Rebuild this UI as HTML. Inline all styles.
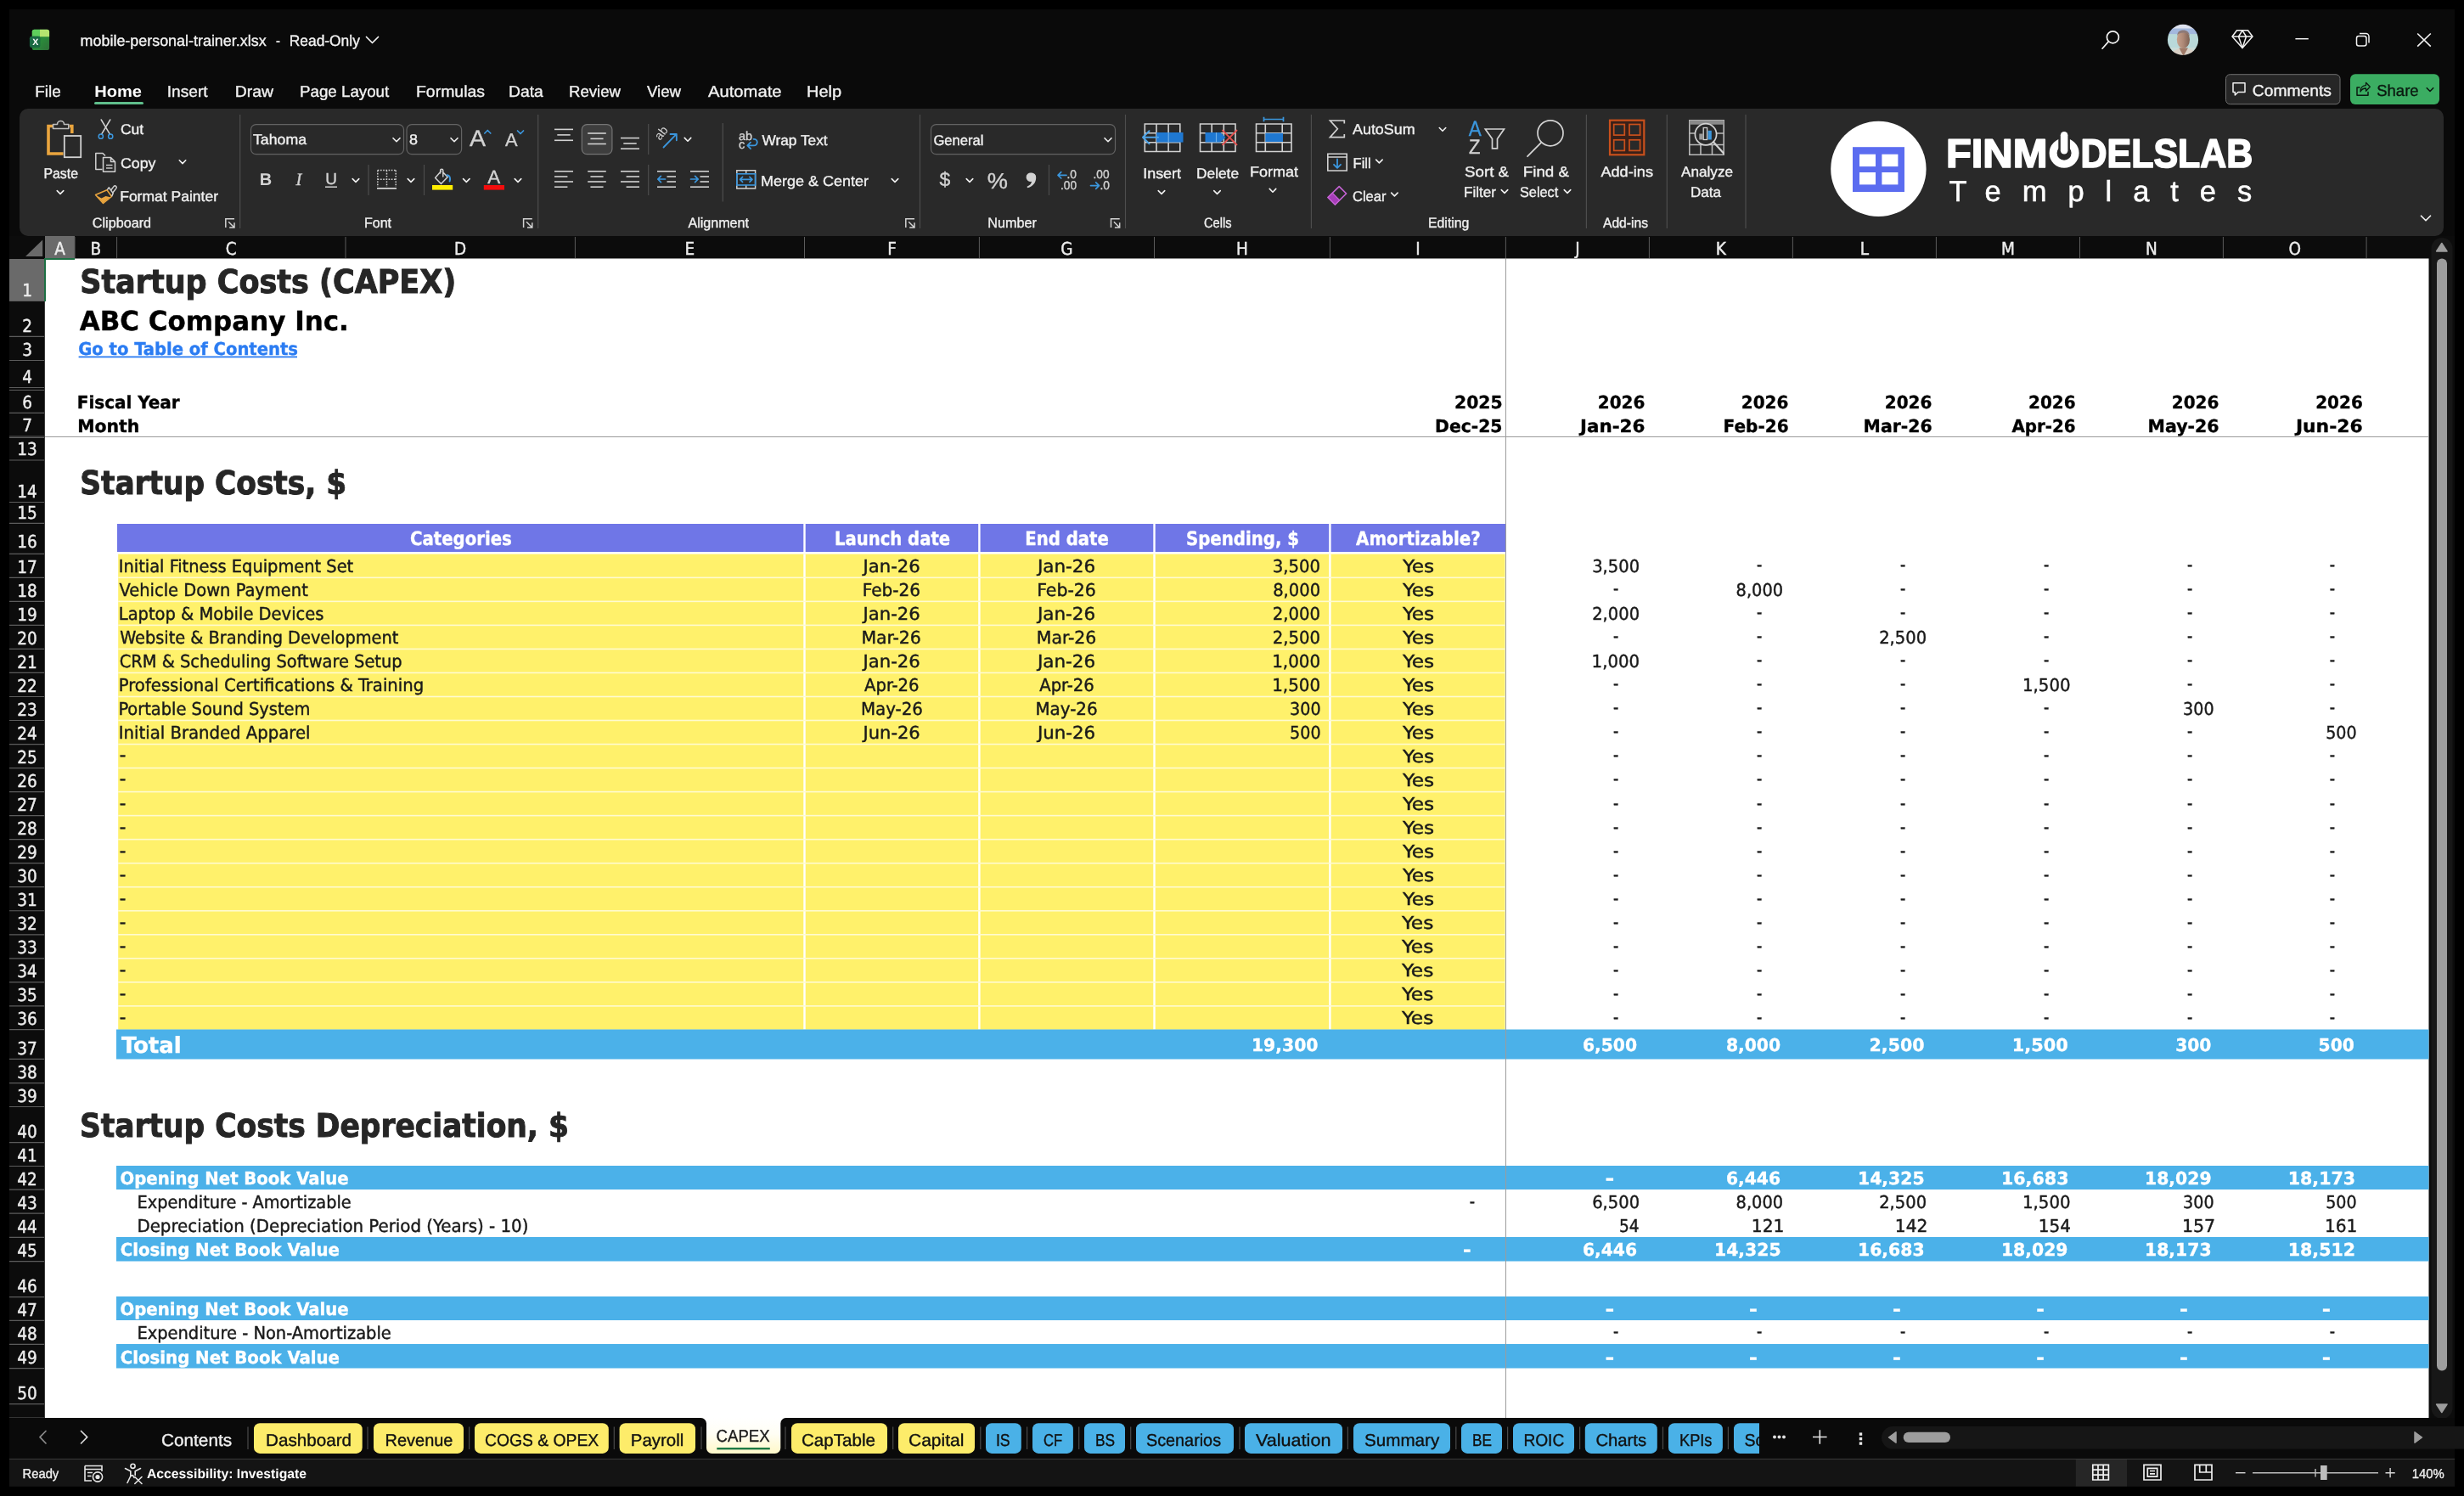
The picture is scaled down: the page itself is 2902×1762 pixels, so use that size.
<!DOCTYPE html>
<html lang="en"><head><meta charset="utf-8"><title>mobile-personal-trainer.xlsx - Excel</title>
<style>
html,body{margin:0;padding:0;background:#000;}
body{width:2902px;height:1762px;overflow:hidden;position:relative;font-family:'Liberation Sans','DejaVu Sans',sans-serif;}
#win{position:absolute;left:11px;top:11px;width:2880px;height:1740px;background:#0a0a0a;}
svg{overflow:hidden;display:block;will-change:transform}
svg text{white-space:pre;text-rendering:geometricPrecision}
svg.grid text{font-family:'DejaVu Sans Condensed','DejaVu Sans',sans-serif}
svg.ui text{font-family:'Liberation Sans','DejaVu Sans',sans-serif}
</style></head>
<body>
<div id="win"></div>
<svg class="grid" style="position:absolute;left:0px;top:278px" width="2902" height="1392" viewBox="0 278 2902 1392">
<rect x="11" y="278" width="2880" height="1392" fill="#0c0c0c"/>
<rect x="53" y="305" width="2807.5" height="1365" fill="#fff"/>
<rect x="53" y="278" width="35" height="27" fill="#6a6a6a"/>
<rect x="11" y="305" width="42" height="49.5" fill="#6a6a6a"/>
<path d="M50.2 282.5 L50.2 302 L30 302 Z" fill="#6a6a6a"/>
<text x="70.5" y="299.5" font-size="20.53" fill="#ececec" text-anchor="middle" stroke="#ececec" stroke-width="0.4">A</text>
<line x1="88" y1="279" x2="88" y2="305" stroke="#5c5c5c" stroke-width="1"/>
<text x="112.8" y="299.5" font-size="20.53" fill="#ececec" text-anchor="middle" stroke="#ececec" stroke-width="0.4">B</text>
<line x1="137.6" y1="279" x2="137.6" y2="305" stroke="#5c5c5c" stroke-width="1"/>
<text x="272.3" y="299.5" font-size="20.53" fill="#ececec" text-anchor="middle" stroke="#ececec" stroke-width="0.4">C</text>
<line x1="407" y1="279" x2="407" y2="305" stroke="#5c5c5c" stroke-width="1"/>
<text x="542.2" y="299.5" font-size="20.53" fill="#ececec" text-anchor="middle" stroke="#ececec" stroke-width="0.4">D</text>
<line x1="677.4" y1="279" x2="677.4" y2="305" stroke="#5c5c5c" stroke-width="1"/>
<text x="812.45" y="299.5" font-size="20.53" fill="#ececec" text-anchor="middle" stroke="#ececec" stroke-width="0.4">E</text>
<line x1="947.5" y1="279" x2="947.5" y2="305" stroke="#5c5c5c" stroke-width="1"/>
<text x="1050.45" y="299.5" font-size="20.53" fill="#ececec" text-anchor="middle" stroke="#ececec" stroke-width="0.4">F</text>
<line x1="1153.4" y1="279" x2="1153.4" y2="305" stroke="#5c5c5c" stroke-width="1"/>
<text x="1256.45" y="299.5" font-size="20.53" fill="#ececec" text-anchor="middle" stroke="#ececec" stroke-width="0.4">G</text>
<line x1="1359.5" y1="279" x2="1359.5" y2="305" stroke="#5c5c5c" stroke-width="1"/>
<text x="1462.95" y="299.5" font-size="20.53" fill="#ececec" text-anchor="middle" stroke="#ececec" stroke-width="0.4">H</text>
<line x1="1566.4" y1="279" x2="1566.4" y2="305" stroke="#5c5c5c" stroke-width="1"/>
<text x="1669.9" y="299.5" font-size="20.53" fill="#ececec" text-anchor="middle" stroke="#ececec" stroke-width="0.4">I</text>
<line x1="1773.4" y1="279" x2="1773.4" y2="305" stroke="#5c5c5c" stroke-width="1"/>
<text x="1857.9" y="299.5" font-size="20.53" fill="#ececec" text-anchor="middle" stroke="#ececec" stroke-width="0.4">J</text>
<line x1="1942.4" y1="279" x2="1942.4" y2="305" stroke="#5c5c5c" stroke-width="1"/>
<text x="2026.9" y="299.5" font-size="20.53" fill="#ececec" text-anchor="middle" stroke="#ececec" stroke-width="0.4">K</text>
<line x1="2111.4" y1="279" x2="2111.4" y2="305" stroke="#5c5c5c" stroke-width="1"/>
<text x="2195.9" y="299.5" font-size="20.53" fill="#ececec" text-anchor="middle" stroke="#ececec" stroke-width="0.4">L</text>
<line x1="2280.4" y1="279" x2="2280.4" y2="305" stroke="#5c5c5c" stroke-width="1"/>
<text x="2364.95" y="299.5" font-size="20.53" fill="#ececec" text-anchor="middle" stroke="#ececec" stroke-width="0.4">M</text>
<line x1="2449.5" y1="279" x2="2449.5" y2="305" stroke="#5c5c5c" stroke-width="1"/>
<text x="2533.95" y="299.5" font-size="20.53" fill="#ececec" text-anchor="middle" stroke="#ececec" stroke-width="0.4">N</text>
<line x1="2618.4" y1="279" x2="2618.4" y2="305" stroke="#5c5c5c" stroke-width="1"/>
<text x="2702.75" y="299.5" font-size="20.53" fill="#ececec" text-anchor="middle" stroke="#ececec" stroke-width="0.4">O</text>
<line x1="2787.1" y1="279" x2="2787.1" y2="305" stroke="#5c5c5c" stroke-width="1"/>
<line x1="53" y1="304.5" x2="2860.5" y2="304.5" stroke="#8a8a8a" stroke-width="1"/>
<line x1="11" y1="354.5" x2="53" y2="354.5" stroke="#5c5c5c" stroke-width="1.2"/>
<text x="32" y="348.8" font-size="20.53" fill="#ececec" text-anchor="middle" stroke="#ececec" stroke-width="0.4">1</text>
<line x1="11" y1="396.4" x2="53" y2="396.4" stroke="#5c5c5c" stroke-width="1.2"/>
<text x="32" y="390.7" font-size="20.53" fill="#ececec" text-anchor="middle" stroke="#ececec" stroke-width="0.4">2</text>
<line x1="11" y1="424.5" x2="53" y2="424.5" stroke="#5c5c5c" stroke-width="1.2"/>
<text x="32" y="418.8" font-size="20.53" fill="#ececec" text-anchor="middle" stroke="#ececec" stroke-width="0.4">3</text>
<line x1="11" y1="456.5" x2="53" y2="456.5" stroke="#5c5c5c" stroke-width="1.2"/>
<text x="32" y="450.8" font-size="20.53" fill="#ececec" text-anchor="middle" stroke="#ececec" stroke-width="0.4">4</text>
<line x1="11" y1="486.4" x2="53" y2="486.4" stroke="#5c5c5c" stroke-width="1.2"/>
<text x="32" y="480.7" font-size="20.53" fill="#ececec" text-anchor="middle" stroke="#ececec" stroke-width="0.4">6</text>
<line x1="11" y1="514" x2="53" y2="514" stroke="#5c5c5c" stroke-width="1.2"/>
<text x="32" y="508.3" font-size="20.53" fill="#ececec" text-anchor="middle" stroke="#ececec" stroke-width="0.4">7</text>
<line x1="11" y1="542" x2="53" y2="542" stroke="#5c5c5c" stroke-width="1.2"/>
<text x="32" y="536.3" font-size="20.53" fill="#ececec" text-anchor="middle" stroke="#ececec" stroke-width="0.4">13</text>
<line x1="11" y1="591.5" x2="53" y2="591.5" stroke="#5c5c5c" stroke-width="1.2"/>
<text x="32" y="585.8" font-size="20.53" fill="#ececec" text-anchor="middle" stroke="#ececec" stroke-width="0.4">14</text>
<line x1="11" y1="616.3" x2="53" y2="616.3" stroke="#5c5c5c" stroke-width="1.2"/>
<text x="32" y="610.6" font-size="20.53" fill="#ececec" text-anchor="middle" stroke="#ececec" stroke-width="0.4">15</text>
<line x1="11" y1="652.3" x2="53" y2="652.3" stroke="#5c5c5c" stroke-width="1.2"/>
<text x="32" y="644.7" font-size="20.53" fill="#ececec" text-anchor="middle" stroke="#ececec" stroke-width="0.4">16</text>
<line x1="11" y1="680.33" x2="53" y2="680.33" stroke="#5c5c5c" stroke-width="1.2"/>
<text x="32" y="674.63" font-size="20.53" fill="#ececec" text-anchor="middle" stroke="#ececec" stroke-width="0.4">17</text>
<line x1="11" y1="708.36" x2="53" y2="708.36" stroke="#5c5c5c" stroke-width="1.2"/>
<text x="32" y="702.66" font-size="20.53" fill="#ececec" text-anchor="middle" stroke="#ececec" stroke-width="0.4">18</text>
<line x1="11" y1="736.39" x2="53" y2="736.39" stroke="#5c5c5c" stroke-width="1.2"/>
<text x="32" y="730.69" font-size="20.53" fill="#ececec" text-anchor="middle" stroke="#ececec" stroke-width="0.4">19</text>
<line x1="11" y1="764.42" x2="53" y2="764.42" stroke="#5c5c5c" stroke-width="1.2"/>
<text x="32" y="758.72" font-size="20.53" fill="#ececec" text-anchor="middle" stroke="#ececec" stroke-width="0.4">20</text>
<line x1="11" y1="792.45" x2="53" y2="792.45" stroke="#5c5c5c" stroke-width="1.2"/>
<text x="32" y="786.75" font-size="20.53" fill="#ececec" text-anchor="middle" stroke="#ececec" stroke-width="0.4">21</text>
<line x1="11" y1="820.48" x2="53" y2="820.48" stroke="#5c5c5c" stroke-width="1.2"/>
<text x="32" y="814.78" font-size="20.53" fill="#ececec" text-anchor="middle" stroke="#ececec" stroke-width="0.4">22</text>
<line x1="11" y1="848.51" x2="53" y2="848.51" stroke="#5c5c5c" stroke-width="1.2"/>
<text x="32" y="842.81" font-size="20.53" fill="#ececec" text-anchor="middle" stroke="#ececec" stroke-width="0.4">23</text>
<line x1="11" y1="876.54" x2="53" y2="876.54" stroke="#5c5c5c" stroke-width="1.2"/>
<text x="32" y="870.84" font-size="20.53" fill="#ececec" text-anchor="middle" stroke="#ececec" stroke-width="0.4">24</text>
<line x1="11" y1="904.57" x2="53" y2="904.57" stroke="#5c5c5c" stroke-width="1.2"/>
<text x="32" y="898.87" font-size="20.53" fill="#ececec" text-anchor="middle" stroke="#ececec" stroke-width="0.4">25</text>
<line x1="11" y1="932.6" x2="53" y2="932.6" stroke="#5c5c5c" stroke-width="1.2"/>
<text x="32" y="926.9" font-size="20.53" fill="#ececec" text-anchor="middle" stroke="#ececec" stroke-width="0.4">26</text>
<line x1="11" y1="960.63" x2="53" y2="960.63" stroke="#5c5c5c" stroke-width="1.2"/>
<text x="32" y="954.93" font-size="20.53" fill="#ececec" text-anchor="middle" stroke="#ececec" stroke-width="0.4">27</text>
<line x1="11" y1="988.66" x2="53" y2="988.66" stroke="#5c5c5c" stroke-width="1.2"/>
<text x="32" y="982.96" font-size="20.53" fill="#ececec" text-anchor="middle" stroke="#ececec" stroke-width="0.4">28</text>
<line x1="11" y1="1016.69" x2="53" y2="1016.69" stroke="#5c5c5c" stroke-width="1.2"/>
<text x="32" y="1010.99" font-size="20.53" fill="#ececec" text-anchor="middle" stroke="#ececec" stroke-width="0.4">29</text>
<line x1="11" y1="1044.72" x2="53" y2="1044.72" stroke="#5c5c5c" stroke-width="1.2"/>
<text x="32" y="1039.02" font-size="20.53" fill="#ececec" text-anchor="middle" stroke="#ececec" stroke-width="0.4">30</text>
<line x1="11" y1="1072.75" x2="53" y2="1072.75" stroke="#5c5c5c" stroke-width="1.2"/>
<text x="32" y="1067.05" font-size="20.53" fill="#ececec" text-anchor="middle" stroke="#ececec" stroke-width="0.4">31</text>
<line x1="11" y1="1100.78" x2="53" y2="1100.78" stroke="#5c5c5c" stroke-width="1.2"/>
<text x="32" y="1095.08" font-size="20.53" fill="#ececec" text-anchor="middle" stroke="#ececec" stroke-width="0.4">32</text>
<line x1="11" y1="1128.81" x2="53" y2="1128.81" stroke="#5c5c5c" stroke-width="1.2"/>
<text x="32" y="1123.11" font-size="20.53" fill="#ececec" text-anchor="middle" stroke="#ececec" stroke-width="0.4">33</text>
<line x1="11" y1="1156.84" x2="53" y2="1156.84" stroke="#5c5c5c" stroke-width="1.2"/>
<text x="32" y="1151.14" font-size="20.53" fill="#ececec" text-anchor="middle" stroke="#ececec" stroke-width="0.4">34</text>
<line x1="11" y1="1184.87" x2="53" y2="1184.87" stroke="#5c5c5c" stroke-width="1.2"/>
<text x="32" y="1179.17" font-size="20.53" fill="#ececec" text-anchor="middle" stroke="#ececec" stroke-width="0.4">35</text>
<line x1="11" y1="1212.7" x2="53" y2="1212.7" stroke="#5c5c5c" stroke-width="1.2"/>
<text x="32" y="1207" font-size="20.53" fill="#ececec" text-anchor="middle" stroke="#ececec" stroke-width="0.4">36</text>
<line x1="11" y1="1247.3" x2="53" y2="1247.3" stroke="#5c5c5c" stroke-width="1.2"/>
<text x="32" y="1241.6" font-size="20.53" fill="#ececec" text-anchor="middle" stroke="#ececec" stroke-width="0.4">37</text>
<line x1="11" y1="1275.6" x2="53" y2="1275.6" stroke="#5c5c5c" stroke-width="1.2"/>
<text x="32" y="1269.9" font-size="20.53" fill="#ececec" text-anchor="middle" stroke="#ececec" stroke-width="0.4">38</text>
<line x1="11" y1="1303.5" x2="53" y2="1303.5" stroke="#5c5c5c" stroke-width="1.2"/>
<text x="32" y="1297.8" font-size="20.53" fill="#ececec" text-anchor="middle" stroke="#ececec" stroke-width="0.4">39</text>
<line x1="11" y1="1345.6" x2="53" y2="1345.6" stroke="#5c5c5c" stroke-width="1.2"/>
<text x="32" y="1339.9" font-size="20.53" fill="#ececec" text-anchor="middle" stroke="#ececec" stroke-width="0.4">40</text>
<line x1="11" y1="1373.5" x2="53" y2="1373.5" stroke="#5c5c5c" stroke-width="1.2"/>
<text x="32" y="1367.8" font-size="20.53" fill="#ececec" text-anchor="middle" stroke="#ececec" stroke-width="0.4">41</text>
<line x1="11" y1="1401.2" x2="53" y2="1401.2" stroke="#5c5c5c" stroke-width="1.2"/>
<text x="32" y="1395.5" font-size="20.53" fill="#ececec" text-anchor="middle" stroke="#ececec" stroke-width="0.4">42</text>
<line x1="11" y1="1429.2" x2="53" y2="1429.2" stroke="#5c5c5c" stroke-width="1.2"/>
<text x="32" y="1423.5" font-size="20.53" fill="#ececec" text-anchor="middle" stroke="#ececec" stroke-width="0.4">43</text>
<line x1="11" y1="1457.3" x2="53" y2="1457.3" stroke="#5c5c5c" stroke-width="1.2"/>
<text x="32" y="1451.6" font-size="20.53" fill="#ececec" text-anchor="middle" stroke="#ececec" stroke-width="0.4">44</text>
<line x1="11" y1="1485.6" x2="53" y2="1485.6" stroke="#5c5c5c" stroke-width="1.2"/>
<text x="32" y="1479.9" font-size="20.53" fill="#ececec" text-anchor="middle" stroke="#ececec" stroke-width="0.4">45</text>
<line x1="11" y1="1527.6" x2="53" y2="1527.6" stroke="#5c5c5c" stroke-width="1.2"/>
<text x="32" y="1521.9" font-size="20.53" fill="#ececec" text-anchor="middle" stroke="#ececec" stroke-width="0.4">46</text>
<line x1="11" y1="1555.3" x2="53" y2="1555.3" stroke="#5c5c5c" stroke-width="1.2"/>
<text x="32" y="1549.6" font-size="20.53" fill="#ececec" text-anchor="middle" stroke="#ececec" stroke-width="0.4">47</text>
<line x1="11" y1="1583.3" x2="53" y2="1583.3" stroke="#5c5c5c" stroke-width="1.2"/>
<text x="32" y="1577.6" font-size="20.53" fill="#ececec" text-anchor="middle" stroke="#ececec" stroke-width="0.4">48</text>
<line x1="11" y1="1611.6" x2="53" y2="1611.6" stroke="#5c5c5c" stroke-width="1.2"/>
<text x="32" y="1605.9" font-size="20.53" fill="#ececec" text-anchor="middle" stroke="#ececec" stroke-width="0.4">49</text>
<line x1="11" y1="1653.6" x2="53" y2="1653.6" stroke="#5c5c5c" stroke-width="1.2"/>
<text x="32" y="1647.9" font-size="20.53" fill="#ececec" text-anchor="middle" stroke="#ececec" stroke-width="0.4">50</text>
<line x1="11" y1="1670" x2="53" y2="1670" stroke="#5c5c5c" stroke-width="1.2"/>
<line x1="11" y1="459.5" x2="53" y2="459.5" stroke="#5c5c5c" stroke-width="1"/>
<line x1="11" y1="515.5" x2="53" y2="515.5" stroke="#5c5c5c" stroke-width="1"/>
<line x1="52.5" y1="305" x2="52.5" y2="1670" stroke="#3a3a3a" stroke-width="1"/>
<rect x="53" y="304" width="35" height="2" fill="#1d7044"/>
<rect x="52" y="304" width="2" height="51" fill="#1d7044"/>
<text x="94.20" y="344.8" font-size="38.6" fill="#262626" textLength="443.02" lengthAdjust="spacingAndGlyphs" font-weight="bold" stroke="#262626" stroke-width="0.91">Startup Costs (CAPEX)</text>
<text x="93.80" y="388.5" font-size="31.7" fill="#000" textLength="317.01" lengthAdjust="spacingAndGlyphs" font-weight="bold" stroke="#000" stroke-width="0.35">ABC Company Inc.</text>
<text x="92.20" y="417.6" font-size="20.53" fill="#2b7cf2" textLength="258.82" lengthAdjust="spacingAndGlyphs" font-weight="bold" stroke="#2b7cf2" stroke-width="0.35">Go to Table of Contents</text>
<rect x="92.6" y="419.5" width="257.4" height="1.8" fill="#2b7cf2"/>
<text x="90.80" y="481" font-size="20.53" fill="#000" textLength="120.91" lengthAdjust="spacingAndGlyphs" font-weight="bold" stroke="#000" stroke-width="0.35">Fiscal Year</text>
<text x="91.20" y="508.8" font-size="20.53" fill="#000" textLength="73.13" lengthAdjust="spacingAndGlyphs" font-weight="bold" stroke="#000" stroke-width="0.35">Month</text>
<text x="1713.00" y="480.8" font-size="20.53" fill="#000" textLength="56.68" lengthAdjust="spacingAndGlyphs" style="font-family:'DejaVu Sans','DejaVu Sans Condensed',sans-serif" font-weight="bold" stroke="#000" stroke-width="0.35">2025</text>
<text x="1690.00" y="508.8" font-size="20.53" fill="#000" textLength="79.46" lengthAdjust="spacingAndGlyphs" style="font-family:'DejaVu Sans','DejaVu Sans Condensed',sans-serif" font-weight="bold" stroke="#000" stroke-width="0.35">Dec-25</text>
<text x="1881.80" y="480.8" font-size="20.53" fill="#000" textLength="55.63" lengthAdjust="spacingAndGlyphs" style="font-family:'DejaVu Sans','DejaVu Sans Condensed',sans-serif" font-weight="bold" stroke="#000" stroke-width="0.35">2026</text>
<text x="1861.00" y="508.8" font-size="20.53" fill="#000" textLength="76.44" lengthAdjust="spacingAndGlyphs" style="font-family:'DejaVu Sans','DejaVu Sans Condensed',sans-serif" font-weight="bold" stroke="#000" stroke-width="0.35">Jan-26</text>
<text x="2050.80" y="480.8" font-size="20.53" fill="#000" textLength="55.63" lengthAdjust="spacingAndGlyphs" style="font-family:'DejaVu Sans','DejaVu Sans Condensed',sans-serif" font-weight="bold" stroke="#000" stroke-width="0.35">2026</text>
<text x="2029.60" y="508.8" font-size="20.53" fill="#000" textLength="77.04" lengthAdjust="spacingAndGlyphs" style="font-family:'DejaVu Sans','DejaVu Sans Condensed',sans-serif" font-weight="bold" stroke="#000" stroke-width="0.35">Feb-26</text>
<text x="2219.80" y="480.8" font-size="20.53" fill="#000" textLength="55.63" lengthAdjust="spacingAndGlyphs" style="font-family:'DejaVu Sans','DejaVu Sans Condensed',sans-serif" font-weight="bold" stroke="#000" stroke-width="0.35">2026</text>
<text x="2194.60" y="508.8" font-size="20.53" fill="#000" textLength="81.04" lengthAdjust="spacingAndGlyphs" style="font-family:'DejaVu Sans','DejaVu Sans Condensed',sans-serif" font-weight="bold" stroke="#000" stroke-width="0.35">Mar-26</text>
<text x="2389.00" y="480.8" font-size="20.53" fill="#000" textLength="55.63" lengthAdjust="spacingAndGlyphs" style="font-family:'DejaVu Sans','DejaVu Sans Condensed',sans-serif" font-weight="bold" stroke="#000" stroke-width="0.35">2026</text>
<text x="2369.40" y="508.8" font-size="20.53" fill="#000" textLength="75.20" lengthAdjust="spacingAndGlyphs" style="font-family:'DejaVu Sans','DejaVu Sans Condensed',sans-serif" font-weight="bold" stroke="#000" stroke-width="0.35">Apr-26</text>
<text x="2557.80" y="480.8" font-size="20.53" fill="#000" textLength="55.63" lengthAdjust="spacingAndGlyphs" style="font-family:'DejaVu Sans','DejaVu Sans Condensed',sans-serif" font-weight="bold" stroke="#000" stroke-width="0.35">2026</text>
<text x="2529.60" y="508.8" font-size="20.53" fill="#000" textLength="84.03" lengthAdjust="spacingAndGlyphs" style="font-family:'DejaVu Sans','DejaVu Sans Condensed',sans-serif" font-weight="bold" stroke="#000" stroke-width="0.35">May-26</text>
<text x="2727.20" y="480.8" font-size="20.53" fill="#000" textLength="55.63" lengthAdjust="spacingAndGlyphs" style="font-family:'DejaVu Sans','DejaVu Sans Condensed',sans-serif" font-weight="bold" stroke="#000" stroke-width="0.35">2026</text>
<text x="2703.90" y="508.8" font-size="20.53" fill="#000" textLength="78.85" lengthAdjust="spacingAndGlyphs" style="font-family:'DejaVu Sans','DejaVu Sans Condensed',sans-serif" font-weight="bold" stroke="#000" stroke-width="0.35">Jun-26</text>
<text x="94.20" y="582.4" font-size="38.6" fill="#262626" textLength="314.02" lengthAdjust="spacingAndGlyphs" font-weight="bold" stroke="#262626" stroke-width="0.91">Startup Costs, $</text>
<rect x="138" y="617" width="1635.3" height="33" fill="#6f76e7"/>
<rect x="946.3" y="617" width="2.4" height="33" fill="#fff"/>
<rect x="1152.2" y="617" width="2.4" height="33" fill="#fff"/>
<rect x="1358.3" y="617" width="2.4" height="33" fill="#fff"/>
<rect x="1565.2" y="617" width="2.4" height="33" fill="#fff"/>
<text x="483.00" y="642" font-size="22.4" fill="#fff" textLength="119.82" lengthAdjust="spacingAndGlyphs" font-weight="bold" stroke="#fff" stroke-width="0.35">Categories</text>
<text x="983.00" y="642" font-size="22.4" fill="#fff" textLength="136.08" lengthAdjust="spacingAndGlyphs" font-weight="bold" stroke="#fff" stroke-width="0.35">Launch date</text>
<text x="1207.30" y="642" font-size="22.4" fill="#fff" textLength="98.48" lengthAdjust="spacingAndGlyphs" font-weight="bold" stroke="#fff" stroke-width="0.35">End date</text>
<text x="1397.00" y="642" font-size="22.4" fill="#fff" textLength="133.04" lengthAdjust="spacingAndGlyphs" font-weight="bold" stroke="#fff" stroke-width="0.35">Spending, $</text>
<text x="1597.10" y="642" font-size="22.4" fill="#fff" textLength="146.60" lengthAdjust="spacingAndGlyphs" font-weight="bold" stroke="#fff" stroke-width="0.35">Amortizable?</text>
<rect x="139.2" y="652.6" width="1633.3" height="560.1" fill="#fff16b"/>
<rect x="946.3" y="652.6" width="2.4" height="560.1" fill="#fff"/>
<rect x="1152.2" y="652.6" width="2.4" height="560.1" fill="#fff"/>
<rect x="1358.3" y="652.6" width="2.4" height="560.1" fill="#fff"/>
<rect x="1565.2" y="652.6" width="2.4" height="560.1" fill="#fff"/>
<rect x="139.2" y="679.53" width="1633.3" height="1.6" fill="#fffbd0"/>
<rect x="139.2" y="707.56" width="1633.3" height="1.6" fill="#fffbd0"/>
<rect x="139.2" y="735.59" width="1633.3" height="1.6" fill="#fffbd0"/>
<rect x="139.2" y="763.62" width="1633.3" height="1.6" fill="#fffbd0"/>
<rect x="139.2" y="791.65" width="1633.3" height="1.6" fill="#fffbd0"/>
<rect x="139.2" y="819.68" width="1633.3" height="1.6" fill="#fffbd0"/>
<rect x="139.2" y="847.71" width="1633.3" height="1.6" fill="#fffbd0"/>
<rect x="139.2" y="875.74" width="1633.3" height="1.6" fill="#fffbd0"/>
<rect x="139.2" y="903.77" width="1633.3" height="1.6" fill="#fffbd0"/>
<rect x="139.2" y="931.8" width="1633.3" height="1.6" fill="#fffbd0"/>
<rect x="139.2" y="959.83" width="1633.3" height="1.6" fill="#fffbd0"/>
<rect x="139.2" y="987.86" width="1633.3" height="1.6" fill="#fffbd0"/>
<rect x="139.2" y="1015.89" width="1633.3" height="1.6" fill="#fffbd0"/>
<rect x="139.2" y="1043.92" width="1633.3" height="1.6" fill="#fffbd0"/>
<rect x="139.2" y="1071.95" width="1633.3" height="1.6" fill="#fffbd0"/>
<rect x="139.2" y="1099.98" width="1633.3" height="1.6" fill="#fffbd0"/>
<rect x="139.2" y="1128.01" width="1633.3" height="1.6" fill="#fffbd0"/>
<rect x="139.2" y="1156.04" width="1633.3" height="1.6" fill="#fffbd0"/>
<rect x="139.2" y="1184.07" width="1633.3" height="1.6" fill="#fffbd0"/>
<text x="139.80" y="673.8" font-size="20.53" fill="#1a1a1a" textLength="276.40" lengthAdjust="spacingAndGlyphs" stroke="#1a1a1a" stroke-width="0.4">Initial Fitness Equipment Set</text>
<text x="1016.60" y="673.8" font-size="20.53" fill="#1a1a1a" textLength="67.06" lengthAdjust="spacingAndGlyphs" stroke="#1a1a1a" stroke-width="0.4">Jan-26</text>
<text x="1222.00" y="673.8" font-size="20.53" fill="#1a1a1a" textLength="68.15" lengthAdjust="spacingAndGlyphs" stroke="#1a1a1a" stroke-width="0.4">Jan-26</text>
<text x="1498.80" y="673.8" font-size="20.53" fill="#1a1a1a" textLength="56.29" lengthAdjust="spacingAndGlyphs" stroke="#1a1a1a" stroke-width="0.4">3,500</text>
<text x="1652.00" y="673.8" font-size="20.53" fill="#1a1a1a" textLength="37.22" lengthAdjust="spacingAndGlyphs" stroke="#1a1a1a" stroke-width="0.4">Yes</text>
<text x="1875.20" y="673.8" font-size="20.53" fill="#1a1a1a" textLength="55.90" lengthAdjust="spacingAndGlyphs" stroke="#1a1a1a" stroke-width="0.4">3,500</text>
<text x="2068.90" y="672.2" font-size="20.53" fill="#1a1a1a" textLength="6.30" lengthAdjust="spacingAndGlyphs" stroke="#1a1a1a" stroke-width="0.4">-</text>
<text x="2237.90" y="672.2" font-size="20.53" fill="#1a1a1a" textLength="6.30" lengthAdjust="spacingAndGlyphs" stroke="#1a1a1a" stroke-width="0.4">-</text>
<text x="2407.00" y="672.2" font-size="20.53" fill="#1a1a1a" textLength="6.30" lengthAdjust="spacingAndGlyphs" stroke="#1a1a1a" stroke-width="0.4">-</text>
<text x="2575.90" y="672.2" font-size="20.53" fill="#1a1a1a" textLength="6.30" lengthAdjust="spacingAndGlyphs" stroke="#1a1a1a" stroke-width="0.4">-</text>
<text x="2743.80" y="672.2" font-size="20.53" fill="#1a1a1a" textLength="6.30" lengthAdjust="spacingAndGlyphs" stroke="#1a1a1a" stroke-width="0.4">-</text>
<text x="140.60" y="701.83" font-size="20.53" fill="#1a1a1a" textLength="222.20" lengthAdjust="spacingAndGlyphs" stroke="#1a1a1a" stroke-width="0.4">Vehicle Down Payment</text>
<text x="1015.85" y="701.83" font-size="20.53" fill="#1a1a1a" textLength="68.19" lengthAdjust="spacingAndGlyphs" stroke="#1a1a1a" stroke-width="0.4">Feb-26</text>
<text x="1221.30" y="701.83" font-size="20.53" fill="#1a1a1a" textLength="69.51" lengthAdjust="spacingAndGlyphs" stroke="#1a1a1a" stroke-width="0.4">Feb-26</text>
<text x="1499.20" y="701.83" font-size="20.53" fill="#1a1a1a" textLength="55.90" lengthAdjust="spacingAndGlyphs" stroke="#1a1a1a" stroke-width="0.4">8,000</text>
<text x="1652.00" y="701.83" font-size="20.53" fill="#1a1a1a" textLength="37.22" lengthAdjust="spacingAndGlyphs" stroke="#1a1a1a" stroke-width="0.4">Yes</text>
<text x="1899.90" y="700.23" font-size="20.53" fill="#1a1a1a" textLength="6.30" lengthAdjust="spacingAndGlyphs" stroke="#1a1a1a" stroke-width="0.4">-</text>
<text x="2044.60" y="701.83" font-size="20.53" fill="#1a1a1a" textLength="55.45" lengthAdjust="spacingAndGlyphs" stroke="#1a1a1a" stroke-width="0.4">8,000</text>
<text x="2237.90" y="700.23" font-size="20.53" fill="#1a1a1a" textLength="6.30" lengthAdjust="spacingAndGlyphs" stroke="#1a1a1a" stroke-width="0.4">-</text>
<text x="2407.00" y="700.23" font-size="20.53" fill="#1a1a1a" textLength="6.30" lengthAdjust="spacingAndGlyphs" stroke="#1a1a1a" stroke-width="0.4">-</text>
<text x="2575.90" y="700.23" font-size="20.53" fill="#1a1a1a" textLength="6.30" lengthAdjust="spacingAndGlyphs" stroke="#1a1a1a" stroke-width="0.4">-</text>
<text x="2743.80" y="700.23" font-size="20.53" fill="#1a1a1a" textLength="6.30" lengthAdjust="spacingAndGlyphs" stroke="#1a1a1a" stroke-width="0.4">-</text>
<text x="139.80" y="729.86" font-size="20.53" fill="#1a1a1a" textLength="241.62" lengthAdjust="spacingAndGlyphs" stroke="#1a1a1a" stroke-width="0.4">Laptop &amp; Mobile Devices</text>
<text x="1016.60" y="729.86" font-size="20.53" fill="#1a1a1a" textLength="67.06" lengthAdjust="spacingAndGlyphs" stroke="#1a1a1a" stroke-width="0.4">Jan-26</text>
<text x="1222.00" y="729.86" font-size="20.53" fill="#1a1a1a" textLength="68.15" lengthAdjust="spacingAndGlyphs" stroke="#1a1a1a" stroke-width="0.4">Jan-26</text>
<text x="1498.80" y="729.86" font-size="20.53" fill="#1a1a1a" textLength="56.29" lengthAdjust="spacingAndGlyphs" stroke="#1a1a1a" stroke-width="0.4">2,000</text>
<text x="1652.00" y="729.86" font-size="20.53" fill="#1a1a1a" textLength="37.22" lengthAdjust="spacingAndGlyphs" stroke="#1a1a1a" stroke-width="0.4">Yes</text>
<text x="1875.20" y="729.86" font-size="20.53" fill="#1a1a1a" textLength="55.90" lengthAdjust="spacingAndGlyphs" stroke="#1a1a1a" stroke-width="0.4">2,000</text>
<text x="2068.90" y="728.26" font-size="20.53" fill="#1a1a1a" textLength="6.30" lengthAdjust="spacingAndGlyphs" stroke="#1a1a1a" stroke-width="0.4">-</text>
<text x="2237.90" y="728.26" font-size="20.53" fill="#1a1a1a" textLength="6.30" lengthAdjust="spacingAndGlyphs" stroke="#1a1a1a" stroke-width="0.4">-</text>
<text x="2407.00" y="728.26" font-size="20.53" fill="#1a1a1a" textLength="6.30" lengthAdjust="spacingAndGlyphs" stroke="#1a1a1a" stroke-width="0.4">-</text>
<text x="2575.90" y="728.26" font-size="20.53" fill="#1a1a1a" textLength="6.30" lengthAdjust="spacingAndGlyphs" stroke="#1a1a1a" stroke-width="0.4">-</text>
<text x="2743.80" y="728.26" font-size="20.53" fill="#1a1a1a" textLength="6.30" lengthAdjust="spacingAndGlyphs" stroke="#1a1a1a" stroke-width="0.4">-</text>
<text x="141.20" y="757.89" font-size="20.53" fill="#1a1a1a" textLength="328.09" lengthAdjust="spacingAndGlyphs" stroke="#1a1a1a" stroke-width="0.4">Website &amp; Branding Development</text>
<text x="1014.40" y="757.89" font-size="20.53" fill="#1a1a1a" textLength="70.47" lengthAdjust="spacingAndGlyphs" stroke="#1a1a1a" stroke-width="0.4">Mar-26</text>
<text x="1220.80" y="757.89" font-size="20.53" fill="#1a1a1a" textLength="70.47" lengthAdjust="spacingAndGlyphs" stroke="#1a1a1a" stroke-width="0.4">Mar-26</text>
<text x="1498.80" y="757.89" font-size="20.53" fill="#1a1a1a" textLength="56.29" lengthAdjust="spacingAndGlyphs" stroke="#1a1a1a" stroke-width="0.4">2,500</text>
<text x="1652.00" y="757.89" font-size="20.53" fill="#1a1a1a" textLength="37.22" lengthAdjust="spacingAndGlyphs" stroke="#1a1a1a" stroke-width="0.4">Yes</text>
<text x="1899.90" y="756.29" font-size="20.53" fill="#1a1a1a" textLength="6.30" lengthAdjust="spacingAndGlyphs" stroke="#1a1a1a" stroke-width="0.4">-</text>
<text x="2068.90" y="756.29" font-size="20.53" fill="#1a1a1a" textLength="6.30" lengthAdjust="spacingAndGlyphs" stroke="#1a1a1a" stroke-width="0.4">-</text>
<text x="2213.20" y="757.89" font-size="20.53" fill="#1a1a1a" textLength="55.90" lengthAdjust="spacingAndGlyphs" stroke="#1a1a1a" stroke-width="0.4">2,500</text>
<text x="2407.00" y="756.29" font-size="20.53" fill="#1a1a1a" textLength="6.30" lengthAdjust="spacingAndGlyphs" stroke="#1a1a1a" stroke-width="0.4">-</text>
<text x="2575.90" y="756.29" font-size="20.53" fill="#1a1a1a" textLength="6.30" lengthAdjust="spacingAndGlyphs" stroke="#1a1a1a" stroke-width="0.4">-</text>
<text x="2743.80" y="756.29" font-size="20.53" fill="#1a1a1a" textLength="6.30" lengthAdjust="spacingAndGlyphs" stroke="#1a1a1a" stroke-width="0.4">-</text>
<text x="140.80" y="785.92" font-size="20.53" fill="#1a1a1a" textLength="332.79" lengthAdjust="spacingAndGlyphs" stroke="#1a1a1a" stroke-width="0.4">CRM &amp; Scheduling Software Setup</text>
<text x="1016.60" y="785.92" font-size="20.53" fill="#1a1a1a" textLength="67.06" lengthAdjust="spacingAndGlyphs" stroke="#1a1a1a" stroke-width="0.4">Jan-26</text>
<text x="1222.00" y="785.92" font-size="20.53" fill="#1a1a1a" textLength="68.15" lengthAdjust="spacingAndGlyphs" stroke="#1a1a1a" stroke-width="0.4">Jan-26</text>
<text x="1498.20" y="785.92" font-size="20.53" fill="#1a1a1a" textLength="56.98" lengthAdjust="spacingAndGlyphs" stroke="#1a1a1a" stroke-width="0.4">1,000</text>
<text x="1652.00" y="785.92" font-size="20.53" fill="#1a1a1a" textLength="37.22" lengthAdjust="spacingAndGlyphs" stroke="#1a1a1a" stroke-width="0.4">Yes</text>
<text x="1874.60" y="785.92" font-size="20.53" fill="#1a1a1a" textLength="56.51" lengthAdjust="spacingAndGlyphs" stroke="#1a1a1a" stroke-width="0.4">1,000</text>
<text x="2068.90" y="784.32" font-size="20.53" fill="#1a1a1a" textLength="6.30" lengthAdjust="spacingAndGlyphs" stroke="#1a1a1a" stroke-width="0.4">-</text>
<text x="2237.90" y="784.32" font-size="20.53" fill="#1a1a1a" textLength="6.30" lengthAdjust="spacingAndGlyphs" stroke="#1a1a1a" stroke-width="0.4">-</text>
<text x="2407.00" y="784.32" font-size="20.53" fill="#1a1a1a" textLength="6.30" lengthAdjust="spacingAndGlyphs" stroke="#1a1a1a" stroke-width="0.4">-</text>
<text x="2575.90" y="784.32" font-size="20.53" fill="#1a1a1a" textLength="6.30" lengthAdjust="spacingAndGlyphs" stroke="#1a1a1a" stroke-width="0.4">-</text>
<text x="2743.80" y="784.32" font-size="20.53" fill="#1a1a1a" textLength="6.30" lengthAdjust="spacingAndGlyphs" stroke="#1a1a1a" stroke-width="0.4">-</text>
<text x="139.80" y="813.95" font-size="20.53" fill="#1a1a1a" textLength="359.44" lengthAdjust="spacingAndGlyphs" stroke="#1a1a1a" stroke-width="0.4">Professional Certifications &amp; Training</text>
<text x="1018.05" y="813.95" font-size="20.53" fill="#1a1a1a" textLength="64.50" lengthAdjust="spacingAndGlyphs" stroke="#1a1a1a" stroke-width="0.4">Apr-26</text>
<text x="1224.25" y="813.95" font-size="20.53" fill="#1a1a1a" textLength="64.50" lengthAdjust="spacingAndGlyphs" stroke="#1a1a1a" stroke-width="0.4">Apr-26</text>
<text x="1498.20" y="813.95" font-size="20.53" fill="#1a1a1a" textLength="56.98" lengthAdjust="spacingAndGlyphs" stroke="#1a1a1a" stroke-width="0.4">1,500</text>
<text x="1652.00" y="813.95" font-size="20.53" fill="#1a1a1a" textLength="37.22" lengthAdjust="spacingAndGlyphs" stroke="#1a1a1a" stroke-width="0.4">Yes</text>
<text x="1899.90" y="812.35" font-size="20.53" fill="#1a1a1a" textLength="6.30" lengthAdjust="spacingAndGlyphs" stroke="#1a1a1a" stroke-width="0.4">-</text>
<text x="2068.90" y="812.35" font-size="20.53" fill="#1a1a1a" textLength="6.30" lengthAdjust="spacingAndGlyphs" stroke="#1a1a1a" stroke-width="0.4">-</text>
<text x="2237.90" y="812.35" font-size="20.53" fill="#1a1a1a" textLength="6.30" lengthAdjust="spacingAndGlyphs" stroke="#1a1a1a" stroke-width="0.4">-</text>
<text x="2382.00" y="813.95" font-size="20.53" fill="#1a1a1a" textLength="56.51" lengthAdjust="spacingAndGlyphs" stroke="#1a1a1a" stroke-width="0.4">1,500</text>
<text x="2575.90" y="812.35" font-size="20.53" fill="#1a1a1a" textLength="6.30" lengthAdjust="spacingAndGlyphs" stroke="#1a1a1a" stroke-width="0.4">-</text>
<text x="2743.80" y="812.35" font-size="20.53" fill="#1a1a1a" textLength="6.30" lengthAdjust="spacingAndGlyphs" stroke="#1a1a1a" stroke-width="0.4">-</text>
<text x="139.40" y="841.98" font-size="20.53" fill="#1a1a1a" textLength="226.03" lengthAdjust="spacingAndGlyphs" stroke="#1a1a1a" stroke-width="0.4">Portable Sound System</text>
<text x="1014.00" y="841.98" font-size="20.53" fill="#1a1a1a" textLength="72.89" lengthAdjust="spacingAndGlyphs" stroke="#1a1a1a" stroke-width="0.4">May-26</text>
<text x="1219.40" y="841.98" font-size="20.53" fill="#1a1a1a" textLength="73.30" lengthAdjust="spacingAndGlyphs" stroke="#1a1a1a" stroke-width="0.4">May-26</text>
<text x="1519.10" y="841.98" font-size="20.53" fill="#1a1a1a" textLength="36.49" lengthAdjust="spacingAndGlyphs" stroke="#1a1a1a" stroke-width="0.4">300</text>
<text x="1652.00" y="841.98" font-size="20.53" fill="#1a1a1a" textLength="37.22" lengthAdjust="spacingAndGlyphs" stroke="#1a1a1a" stroke-width="0.4">Yes</text>
<text x="1899.90" y="840.38" font-size="20.53" fill="#1a1a1a" textLength="6.30" lengthAdjust="spacingAndGlyphs" stroke="#1a1a1a" stroke-width="0.4">-</text>
<text x="2068.90" y="840.38" font-size="20.53" fill="#1a1a1a" textLength="6.30" lengthAdjust="spacingAndGlyphs" stroke="#1a1a1a" stroke-width="0.4">-</text>
<text x="2237.90" y="840.38" font-size="20.53" fill="#1a1a1a" textLength="6.30" lengthAdjust="spacingAndGlyphs" stroke="#1a1a1a" stroke-width="0.4">-</text>
<text x="2407.00" y="840.38" font-size="20.53" fill="#1a1a1a" textLength="6.30" lengthAdjust="spacingAndGlyphs" stroke="#1a1a1a" stroke-width="0.4">-</text>
<text x="2571.10" y="841.98" font-size="20.53" fill="#1a1a1a" textLength="36.49" lengthAdjust="spacingAndGlyphs" stroke="#1a1a1a" stroke-width="0.4">300</text>
<text x="2743.80" y="840.38" font-size="20.53" fill="#1a1a1a" textLength="6.30" lengthAdjust="spacingAndGlyphs" stroke="#1a1a1a" stroke-width="0.4">-</text>
<text x="139.80" y="870.01" font-size="20.53" fill="#1a1a1a" textLength="225.66" lengthAdjust="spacingAndGlyphs" stroke="#1a1a1a" stroke-width="0.4">Initial Branded Apparel</text>
<text x="1016.60" y="870.01" font-size="20.53" fill="#1a1a1a" textLength="67.06" lengthAdjust="spacingAndGlyphs" stroke="#1a1a1a" stroke-width="0.4">Jun-26</text>
<text x="1222.00" y="870.01" font-size="20.53" fill="#1a1a1a" textLength="68.15" lengthAdjust="spacingAndGlyphs" stroke="#1a1a1a" stroke-width="0.4">Jun-26</text>
<text x="1519.10" y="870.01" font-size="20.53" fill="#1a1a1a" textLength="36.49" lengthAdjust="spacingAndGlyphs" stroke="#1a1a1a" stroke-width="0.4">500</text>
<text x="1652.00" y="870.01" font-size="20.53" fill="#1a1a1a" textLength="37.22" lengthAdjust="spacingAndGlyphs" stroke="#1a1a1a" stroke-width="0.4">Yes</text>
<text x="1899.90" y="868.41" font-size="20.53" fill="#1a1a1a" textLength="6.30" lengthAdjust="spacingAndGlyphs" stroke="#1a1a1a" stroke-width="0.4">-</text>
<text x="2068.90" y="868.41" font-size="20.53" fill="#1a1a1a" textLength="6.30" lengthAdjust="spacingAndGlyphs" stroke="#1a1a1a" stroke-width="0.4">-</text>
<text x="2237.90" y="868.41" font-size="20.53" fill="#1a1a1a" textLength="6.30" lengthAdjust="spacingAndGlyphs" stroke="#1a1a1a" stroke-width="0.4">-</text>
<text x="2407.00" y="868.41" font-size="20.53" fill="#1a1a1a" textLength="6.30" lengthAdjust="spacingAndGlyphs" stroke="#1a1a1a" stroke-width="0.4">-</text>
<text x="2575.90" y="868.41" font-size="20.53" fill="#1a1a1a" textLength="6.30" lengthAdjust="spacingAndGlyphs" stroke="#1a1a1a" stroke-width="0.4">-</text>
<text x="2739.20" y="870.01" font-size="20.53" fill="#1a1a1a" textLength="36.49" lengthAdjust="spacingAndGlyphs" stroke="#1a1a1a" stroke-width="0.4">500</text>
<text x="140.80" y="896.44" font-size="20.53" fill="#1a1a1a" textLength="7.57" lengthAdjust="spacingAndGlyphs" stroke="#1a1a1a" stroke-width="0.4">-</text>
<text x="1652.00" y="898.04" font-size="20.53" fill="#1a1a1a" textLength="37.22" lengthAdjust="spacingAndGlyphs" stroke="#1a1a1a" stroke-width="0.4">Yes</text>
<text x="1899.90" y="896.44" font-size="20.53" fill="#1a1a1a" textLength="6.30" lengthAdjust="spacingAndGlyphs" stroke="#1a1a1a" stroke-width="0.4">-</text>
<text x="2068.90" y="896.44" font-size="20.53" fill="#1a1a1a" textLength="6.30" lengthAdjust="spacingAndGlyphs" stroke="#1a1a1a" stroke-width="0.4">-</text>
<text x="2237.90" y="896.44" font-size="20.53" fill="#1a1a1a" textLength="6.30" lengthAdjust="spacingAndGlyphs" stroke="#1a1a1a" stroke-width="0.4">-</text>
<text x="2407.00" y="896.44" font-size="20.53" fill="#1a1a1a" textLength="6.30" lengthAdjust="spacingAndGlyphs" stroke="#1a1a1a" stroke-width="0.4">-</text>
<text x="2575.90" y="896.44" font-size="20.53" fill="#1a1a1a" textLength="6.30" lengthAdjust="spacingAndGlyphs" stroke="#1a1a1a" stroke-width="0.4">-</text>
<text x="2743.80" y="896.44" font-size="20.53" fill="#1a1a1a" textLength="6.30" lengthAdjust="spacingAndGlyphs" stroke="#1a1a1a" stroke-width="0.4">-</text>
<text x="140.80" y="924.47" font-size="20.53" fill="#1a1a1a" textLength="7.57" lengthAdjust="spacingAndGlyphs" stroke="#1a1a1a" stroke-width="0.4">-</text>
<text x="1652.00" y="926.07" font-size="20.53" fill="#1a1a1a" textLength="37.22" lengthAdjust="spacingAndGlyphs" stroke="#1a1a1a" stroke-width="0.4">Yes</text>
<text x="1899.90" y="924.47" font-size="20.53" fill="#1a1a1a" textLength="6.30" lengthAdjust="spacingAndGlyphs" stroke="#1a1a1a" stroke-width="0.4">-</text>
<text x="2068.90" y="924.47" font-size="20.53" fill="#1a1a1a" textLength="6.30" lengthAdjust="spacingAndGlyphs" stroke="#1a1a1a" stroke-width="0.4">-</text>
<text x="2237.90" y="924.47" font-size="20.53" fill="#1a1a1a" textLength="6.30" lengthAdjust="spacingAndGlyphs" stroke="#1a1a1a" stroke-width="0.4">-</text>
<text x="2407.00" y="924.47" font-size="20.53" fill="#1a1a1a" textLength="6.30" lengthAdjust="spacingAndGlyphs" stroke="#1a1a1a" stroke-width="0.4">-</text>
<text x="2575.90" y="924.47" font-size="20.53" fill="#1a1a1a" textLength="6.30" lengthAdjust="spacingAndGlyphs" stroke="#1a1a1a" stroke-width="0.4">-</text>
<text x="2743.80" y="924.47" font-size="20.53" fill="#1a1a1a" textLength="6.30" lengthAdjust="spacingAndGlyphs" stroke="#1a1a1a" stroke-width="0.4">-</text>
<text x="140.80" y="952.5" font-size="20.53" fill="#1a1a1a" textLength="7.57" lengthAdjust="spacingAndGlyphs" stroke="#1a1a1a" stroke-width="0.4">-</text>
<text x="1652.00" y="954.1" font-size="20.53" fill="#1a1a1a" textLength="37.22" lengthAdjust="spacingAndGlyphs" stroke="#1a1a1a" stroke-width="0.4">Yes</text>
<text x="1899.90" y="952.5" font-size="20.53" fill="#1a1a1a" textLength="6.30" lengthAdjust="spacingAndGlyphs" stroke="#1a1a1a" stroke-width="0.4">-</text>
<text x="2068.90" y="952.5" font-size="20.53" fill="#1a1a1a" textLength="6.30" lengthAdjust="spacingAndGlyphs" stroke="#1a1a1a" stroke-width="0.4">-</text>
<text x="2237.90" y="952.5" font-size="20.53" fill="#1a1a1a" textLength="6.30" lengthAdjust="spacingAndGlyphs" stroke="#1a1a1a" stroke-width="0.4">-</text>
<text x="2407.00" y="952.5" font-size="20.53" fill="#1a1a1a" textLength="6.30" lengthAdjust="spacingAndGlyphs" stroke="#1a1a1a" stroke-width="0.4">-</text>
<text x="2575.90" y="952.5" font-size="20.53" fill="#1a1a1a" textLength="6.30" lengthAdjust="spacingAndGlyphs" stroke="#1a1a1a" stroke-width="0.4">-</text>
<text x="2743.80" y="952.5" font-size="20.53" fill="#1a1a1a" textLength="6.30" lengthAdjust="spacingAndGlyphs" stroke="#1a1a1a" stroke-width="0.4">-</text>
<text x="140.80" y="980.53" font-size="20.53" fill="#1a1a1a" textLength="7.57" lengthAdjust="spacingAndGlyphs" stroke="#1a1a1a" stroke-width="0.4">-</text>
<text x="1652.00" y="982.13" font-size="20.53" fill="#1a1a1a" textLength="37.22" lengthAdjust="spacingAndGlyphs" stroke="#1a1a1a" stroke-width="0.4">Yes</text>
<text x="1899.90" y="980.53" font-size="20.53" fill="#1a1a1a" textLength="6.30" lengthAdjust="spacingAndGlyphs" stroke="#1a1a1a" stroke-width="0.4">-</text>
<text x="2068.90" y="980.53" font-size="20.53" fill="#1a1a1a" textLength="6.30" lengthAdjust="spacingAndGlyphs" stroke="#1a1a1a" stroke-width="0.4">-</text>
<text x="2237.90" y="980.53" font-size="20.53" fill="#1a1a1a" textLength="6.30" lengthAdjust="spacingAndGlyphs" stroke="#1a1a1a" stroke-width="0.4">-</text>
<text x="2407.00" y="980.53" font-size="20.53" fill="#1a1a1a" textLength="6.30" lengthAdjust="spacingAndGlyphs" stroke="#1a1a1a" stroke-width="0.4">-</text>
<text x="2575.90" y="980.53" font-size="20.53" fill="#1a1a1a" textLength="6.30" lengthAdjust="spacingAndGlyphs" stroke="#1a1a1a" stroke-width="0.4">-</text>
<text x="2743.80" y="980.53" font-size="20.53" fill="#1a1a1a" textLength="6.30" lengthAdjust="spacingAndGlyphs" stroke="#1a1a1a" stroke-width="0.4">-</text>
<text x="140.80" y="1008.56" font-size="20.53" fill="#1a1a1a" textLength="7.57" lengthAdjust="spacingAndGlyphs" stroke="#1a1a1a" stroke-width="0.4">-</text>
<text x="1652.00" y="1010.16" font-size="20.53" fill="#1a1a1a" textLength="37.22" lengthAdjust="spacingAndGlyphs" stroke="#1a1a1a" stroke-width="0.4">Yes</text>
<text x="1899.90" y="1008.56" font-size="20.53" fill="#1a1a1a" textLength="6.30" lengthAdjust="spacingAndGlyphs" stroke="#1a1a1a" stroke-width="0.4">-</text>
<text x="2068.90" y="1008.56" font-size="20.53" fill="#1a1a1a" textLength="6.30" lengthAdjust="spacingAndGlyphs" stroke="#1a1a1a" stroke-width="0.4">-</text>
<text x="2237.90" y="1008.56" font-size="20.53" fill="#1a1a1a" textLength="6.30" lengthAdjust="spacingAndGlyphs" stroke="#1a1a1a" stroke-width="0.4">-</text>
<text x="2407.00" y="1008.56" font-size="20.53" fill="#1a1a1a" textLength="6.30" lengthAdjust="spacingAndGlyphs" stroke="#1a1a1a" stroke-width="0.4">-</text>
<text x="2575.90" y="1008.56" font-size="20.53" fill="#1a1a1a" textLength="6.30" lengthAdjust="spacingAndGlyphs" stroke="#1a1a1a" stroke-width="0.4">-</text>
<text x="2743.80" y="1008.56" font-size="20.53" fill="#1a1a1a" textLength="6.30" lengthAdjust="spacingAndGlyphs" stroke="#1a1a1a" stroke-width="0.4">-</text>
<text x="140.80" y="1036.59" font-size="20.53" fill="#1a1a1a" textLength="7.57" lengthAdjust="spacingAndGlyphs" stroke="#1a1a1a" stroke-width="0.4">-</text>
<text x="1652.00" y="1038.19" font-size="20.53" fill="#1a1a1a" textLength="37.22" lengthAdjust="spacingAndGlyphs" stroke="#1a1a1a" stroke-width="0.4">Yes</text>
<text x="1899.90" y="1036.59" font-size="20.53" fill="#1a1a1a" textLength="6.30" lengthAdjust="spacingAndGlyphs" stroke="#1a1a1a" stroke-width="0.4">-</text>
<text x="2068.90" y="1036.59" font-size="20.53" fill="#1a1a1a" textLength="6.30" lengthAdjust="spacingAndGlyphs" stroke="#1a1a1a" stroke-width="0.4">-</text>
<text x="2237.90" y="1036.59" font-size="20.53" fill="#1a1a1a" textLength="6.30" lengthAdjust="spacingAndGlyphs" stroke="#1a1a1a" stroke-width="0.4">-</text>
<text x="2407.00" y="1036.59" font-size="20.53" fill="#1a1a1a" textLength="6.30" lengthAdjust="spacingAndGlyphs" stroke="#1a1a1a" stroke-width="0.4">-</text>
<text x="2575.90" y="1036.59" font-size="20.53" fill="#1a1a1a" textLength="6.30" lengthAdjust="spacingAndGlyphs" stroke="#1a1a1a" stroke-width="0.4">-</text>
<text x="2743.80" y="1036.59" font-size="20.53" fill="#1a1a1a" textLength="6.30" lengthAdjust="spacingAndGlyphs" stroke="#1a1a1a" stroke-width="0.4">-</text>
<text x="140.80" y="1064.62" font-size="20.53" fill="#1a1a1a" textLength="7.57" lengthAdjust="spacingAndGlyphs" stroke="#1a1a1a" stroke-width="0.4">-</text>
<text x="1652.00" y="1066.22" font-size="20.53" fill="#1a1a1a" textLength="37.22" lengthAdjust="spacingAndGlyphs" stroke="#1a1a1a" stroke-width="0.4">Yes</text>
<text x="1899.90" y="1064.62" font-size="20.53" fill="#1a1a1a" textLength="6.30" lengthAdjust="spacingAndGlyphs" stroke="#1a1a1a" stroke-width="0.4">-</text>
<text x="2068.90" y="1064.62" font-size="20.53" fill="#1a1a1a" textLength="6.30" lengthAdjust="spacingAndGlyphs" stroke="#1a1a1a" stroke-width="0.4">-</text>
<text x="2237.90" y="1064.62" font-size="20.53" fill="#1a1a1a" textLength="6.30" lengthAdjust="spacingAndGlyphs" stroke="#1a1a1a" stroke-width="0.4">-</text>
<text x="2407.00" y="1064.62" font-size="20.53" fill="#1a1a1a" textLength="6.30" lengthAdjust="spacingAndGlyphs" stroke="#1a1a1a" stroke-width="0.4">-</text>
<text x="2575.90" y="1064.62" font-size="20.53" fill="#1a1a1a" textLength="6.30" lengthAdjust="spacingAndGlyphs" stroke="#1a1a1a" stroke-width="0.4">-</text>
<text x="2743.80" y="1064.62" font-size="20.53" fill="#1a1a1a" textLength="6.30" lengthAdjust="spacingAndGlyphs" stroke="#1a1a1a" stroke-width="0.4">-</text>
<text x="140.80" y="1092.65" font-size="20.53" fill="#1a1a1a" textLength="7.57" lengthAdjust="spacingAndGlyphs" stroke="#1a1a1a" stroke-width="0.4">-</text>
<text x="1651.00" y="1094.25" font-size="20.53" fill="#1a1a1a" textLength="37.38" lengthAdjust="spacingAndGlyphs" stroke="#1a1a1a" stroke-width="0.4">Yes</text>
<text x="1899.90" y="1092.65" font-size="20.53" fill="#1a1a1a" textLength="6.30" lengthAdjust="spacingAndGlyphs" stroke="#1a1a1a" stroke-width="0.4">-</text>
<text x="2068.90" y="1092.65" font-size="20.53" fill="#1a1a1a" textLength="6.30" lengthAdjust="spacingAndGlyphs" stroke="#1a1a1a" stroke-width="0.4">-</text>
<text x="2237.90" y="1092.65" font-size="20.53" fill="#1a1a1a" textLength="6.30" lengthAdjust="spacingAndGlyphs" stroke="#1a1a1a" stroke-width="0.4">-</text>
<text x="2407.00" y="1092.65" font-size="20.53" fill="#1a1a1a" textLength="6.30" lengthAdjust="spacingAndGlyphs" stroke="#1a1a1a" stroke-width="0.4">-</text>
<text x="2575.90" y="1092.65" font-size="20.53" fill="#1a1a1a" textLength="6.30" lengthAdjust="spacingAndGlyphs" stroke="#1a1a1a" stroke-width="0.4">-</text>
<text x="2743.80" y="1092.65" font-size="20.53" fill="#1a1a1a" textLength="6.30" lengthAdjust="spacingAndGlyphs" stroke="#1a1a1a" stroke-width="0.4">-</text>
<text x="140.80" y="1120.68" font-size="20.53" fill="#1a1a1a" textLength="7.57" lengthAdjust="spacingAndGlyphs" stroke="#1a1a1a" stroke-width="0.4">-</text>
<text x="1651.00" y="1122.28" font-size="20.53" fill="#1a1a1a" textLength="37.38" lengthAdjust="spacingAndGlyphs" stroke="#1a1a1a" stroke-width="0.4">Yes</text>
<text x="1899.90" y="1120.68" font-size="20.53" fill="#1a1a1a" textLength="6.30" lengthAdjust="spacingAndGlyphs" stroke="#1a1a1a" stroke-width="0.4">-</text>
<text x="2068.90" y="1120.68" font-size="20.53" fill="#1a1a1a" textLength="6.30" lengthAdjust="spacingAndGlyphs" stroke="#1a1a1a" stroke-width="0.4">-</text>
<text x="2237.90" y="1120.68" font-size="20.53" fill="#1a1a1a" textLength="6.30" lengthAdjust="spacingAndGlyphs" stroke="#1a1a1a" stroke-width="0.4">-</text>
<text x="2407.00" y="1120.68" font-size="20.53" fill="#1a1a1a" textLength="6.30" lengthAdjust="spacingAndGlyphs" stroke="#1a1a1a" stroke-width="0.4">-</text>
<text x="2575.90" y="1120.68" font-size="20.53" fill="#1a1a1a" textLength="6.30" lengthAdjust="spacingAndGlyphs" stroke="#1a1a1a" stroke-width="0.4">-</text>
<text x="2743.80" y="1120.68" font-size="20.53" fill="#1a1a1a" textLength="6.30" lengthAdjust="spacingAndGlyphs" stroke="#1a1a1a" stroke-width="0.4">-</text>
<text x="140.80" y="1148.71" font-size="20.53" fill="#1a1a1a" textLength="7.57" lengthAdjust="spacingAndGlyphs" stroke="#1a1a1a" stroke-width="0.4">-</text>
<text x="1651.00" y="1150.31" font-size="20.53" fill="#1a1a1a" textLength="37.38" lengthAdjust="spacingAndGlyphs" stroke="#1a1a1a" stroke-width="0.4">Yes</text>
<text x="1899.90" y="1148.71" font-size="20.53" fill="#1a1a1a" textLength="6.30" lengthAdjust="spacingAndGlyphs" stroke="#1a1a1a" stroke-width="0.4">-</text>
<text x="2068.90" y="1148.71" font-size="20.53" fill="#1a1a1a" textLength="6.30" lengthAdjust="spacingAndGlyphs" stroke="#1a1a1a" stroke-width="0.4">-</text>
<text x="2237.90" y="1148.71" font-size="20.53" fill="#1a1a1a" textLength="6.30" lengthAdjust="spacingAndGlyphs" stroke="#1a1a1a" stroke-width="0.4">-</text>
<text x="2407.00" y="1148.71" font-size="20.53" fill="#1a1a1a" textLength="6.30" lengthAdjust="spacingAndGlyphs" stroke="#1a1a1a" stroke-width="0.4">-</text>
<text x="2575.90" y="1148.71" font-size="20.53" fill="#1a1a1a" textLength="6.30" lengthAdjust="spacingAndGlyphs" stroke="#1a1a1a" stroke-width="0.4">-</text>
<text x="2743.80" y="1148.71" font-size="20.53" fill="#1a1a1a" textLength="6.30" lengthAdjust="spacingAndGlyphs" stroke="#1a1a1a" stroke-width="0.4">-</text>
<text x="140.80" y="1176.74" font-size="20.53" fill="#1a1a1a" textLength="7.57" lengthAdjust="spacingAndGlyphs" stroke="#1a1a1a" stroke-width="0.4">-</text>
<text x="1651.00" y="1178.34" font-size="20.53" fill="#1a1a1a" textLength="37.38" lengthAdjust="spacingAndGlyphs" stroke="#1a1a1a" stroke-width="0.4">Yes</text>
<text x="1899.90" y="1176.74" font-size="20.53" fill="#1a1a1a" textLength="6.30" lengthAdjust="spacingAndGlyphs" stroke="#1a1a1a" stroke-width="0.4">-</text>
<text x="2068.90" y="1176.74" font-size="20.53" fill="#1a1a1a" textLength="6.30" lengthAdjust="spacingAndGlyphs" stroke="#1a1a1a" stroke-width="0.4">-</text>
<text x="2237.90" y="1176.74" font-size="20.53" fill="#1a1a1a" textLength="6.30" lengthAdjust="spacingAndGlyphs" stroke="#1a1a1a" stroke-width="0.4">-</text>
<text x="2407.00" y="1176.74" font-size="20.53" fill="#1a1a1a" textLength="6.30" lengthAdjust="spacingAndGlyphs" stroke="#1a1a1a" stroke-width="0.4">-</text>
<text x="2575.90" y="1176.74" font-size="20.53" fill="#1a1a1a" textLength="6.30" lengthAdjust="spacingAndGlyphs" stroke="#1a1a1a" stroke-width="0.4">-</text>
<text x="2743.80" y="1176.74" font-size="20.53" fill="#1a1a1a" textLength="6.30" lengthAdjust="spacingAndGlyphs" stroke="#1a1a1a" stroke-width="0.4">-</text>
<text x="140.80" y="1204.77" font-size="20.53" fill="#1a1a1a" textLength="7.57" lengthAdjust="spacingAndGlyphs" stroke="#1a1a1a" stroke-width="0.4">-</text>
<text x="1651.00" y="1206.37" font-size="20.53" fill="#1a1a1a" textLength="37.38" lengthAdjust="spacingAndGlyphs" stroke="#1a1a1a" stroke-width="0.4">Yes</text>
<text x="1899.90" y="1204.77" font-size="20.53" fill="#1a1a1a" textLength="6.30" lengthAdjust="spacingAndGlyphs" stroke="#1a1a1a" stroke-width="0.4">-</text>
<text x="2068.90" y="1204.77" font-size="20.53" fill="#1a1a1a" textLength="6.30" lengthAdjust="spacingAndGlyphs" stroke="#1a1a1a" stroke-width="0.4">-</text>
<text x="2237.90" y="1204.77" font-size="20.53" fill="#1a1a1a" textLength="6.30" lengthAdjust="spacingAndGlyphs" stroke="#1a1a1a" stroke-width="0.4">-</text>
<text x="2407.00" y="1204.77" font-size="20.53" fill="#1a1a1a" textLength="6.30" lengthAdjust="spacingAndGlyphs" stroke="#1a1a1a" stroke-width="0.4">-</text>
<text x="2575.90" y="1204.77" font-size="20.53" fill="#1a1a1a" textLength="6.30" lengthAdjust="spacingAndGlyphs" stroke="#1a1a1a" stroke-width="0.4">-</text>
<text x="2743.80" y="1204.77" font-size="20.53" fill="#1a1a1a" textLength="6.30" lengthAdjust="spacingAndGlyphs" stroke="#1a1a1a" stroke-width="0.4">-</text>
<rect x="137" y="1212.5" width="2723.5" height="35" fill="#4bb1e9"/>
<text x="143.00" y="1239.7" font-size="26.1" fill="#fff" textLength="70.70" lengthAdjust="spacingAndGlyphs" font-weight="bold" stroke="#fff" stroke-width="0.35">Total</text>
<text x="1473.90" y="1238" font-size="20.53" fill="#fff" textLength="78.60" lengthAdjust="spacingAndGlyphs" style="font-family:'DejaVu Sans','DejaVu Sans Condensed',sans-serif" font-weight="bold" stroke="#fff" stroke-width="0.35">19,300</text>
<text x="1863.90" y="1238" font-size="20.53" fill="#fff" textLength="64.25" lengthAdjust="spacingAndGlyphs" style="font-family:'DejaVu Sans','DejaVu Sans Condensed',sans-serif" font-weight="bold" stroke="#fff" stroke-width="0.35">6,500</text>
<text x="2032.90" y="1238" font-size="20.53" fill="#fff" textLength="64.25" lengthAdjust="spacingAndGlyphs" style="font-family:'DejaVu Sans','DejaVu Sans Condensed',sans-serif" font-weight="bold" stroke="#fff" stroke-width="0.35">8,000</text>
<text x="2201.60" y="1238" font-size="20.53" fill="#fff" textLength="64.90" lengthAdjust="spacingAndGlyphs" style="font-family:'DejaVu Sans','DejaVu Sans Condensed',sans-serif" font-weight="bold" stroke="#fff" stroke-width="0.35">2,500</text>
<text x="2369.80" y="1238" font-size="20.53" fill="#fff" textLength="65.99" lengthAdjust="spacingAndGlyphs" style="font-family:'DejaVu Sans','DejaVu Sans Condensed',sans-serif" font-weight="bold" stroke="#fff" stroke-width="0.35">1,500</text>
<text x="2562.20" y="1238" font-size="20.53" fill="#fff" textLength="42.26" lengthAdjust="spacingAndGlyphs" style="font-family:'DejaVu Sans','DejaVu Sans Condensed',sans-serif" font-weight="bold" stroke="#fff" stroke-width="0.35">300</text>
<text x="2730.60" y="1238" font-size="20.53" fill="#fff" textLength="42.26" lengthAdjust="spacingAndGlyphs" style="font-family:'DejaVu Sans','DejaVu Sans Condensed',sans-serif" font-weight="bold" stroke="#fff" stroke-width="0.35">500</text>
<text x="94.00" y="1338.8" font-size="38.6" fill="#262626" textLength="575.95" lengthAdjust="spacingAndGlyphs" font-weight="bold" stroke="#262626" stroke-width="0.91">Startup Costs Depreciation, $</text>
<rect x="137" y="1373" width="2723.5" height="28" fill="#4bb1e9"/>
<text x="141.60" y="1395" font-size="20.53" fill="#fff" textLength="269.02" lengthAdjust="spacingAndGlyphs" font-weight="bold" stroke="#fff" stroke-width="0.35">Opening Net Book Value</text>
<text x="1890.50" y="1395" font-size="20.53" fill="#fff" textLength="10.76" lengthAdjust="spacingAndGlyphs" style="font-family:'DejaVu Sans','DejaVu Sans Condensed',sans-serif" font-weight="bold" stroke="#fff" stroke-width="0.35">-</text>
<text x="2032.90" y="1395" font-size="20.53" fill="#fff" textLength="64.25" lengthAdjust="spacingAndGlyphs" style="font-family:'DejaVu Sans','DejaVu Sans Condensed',sans-serif" font-weight="bold" stroke="#fff" stroke-width="0.35">6,446</text>
<text x="2188.00" y="1395" font-size="20.53" fill="#fff" textLength="78.61" lengthAdjust="spacingAndGlyphs" style="font-family:'DejaVu Sans','DejaVu Sans Condensed',sans-serif" font-weight="bold" stroke="#fff" stroke-width="0.35">14,325</text>
<text x="2356.90" y="1395" font-size="20.53" fill="#fff" textLength="79.67" lengthAdjust="spacingAndGlyphs" style="font-family:'DejaVu Sans','DejaVu Sans Condensed',sans-serif" font-weight="bold" stroke="#fff" stroke-width="0.35">16,683</text>
<text x="2526.00" y="1395" font-size="20.53" fill="#fff" textLength="78.61" lengthAdjust="spacingAndGlyphs" style="font-family:'DejaVu Sans','DejaVu Sans Condensed',sans-serif" font-weight="bold" stroke="#fff" stroke-width="0.35">18,029</text>
<text x="2694.80" y="1395" font-size="20.53" fill="#fff" textLength="79.17" lengthAdjust="spacingAndGlyphs" style="font-family:'DejaVu Sans','DejaVu Sans Condensed',sans-serif" font-weight="bold" stroke="#fff" stroke-width="0.35">18,173</text>
<text x="161.60" y="1423.3" font-size="20.53" fill="#1a1a1a" textLength="252.03" lengthAdjust="spacingAndGlyphs" stroke="#1a1a1a" stroke-width="0.4">Expenditure - Amortizable</text>
<text x="1730.70" y="1421.7" font-size="20.53" fill="#1a1a1a" textLength="6.30" lengthAdjust="spacingAndGlyphs" stroke="#1a1a1a" stroke-width="0.4">-</text>
<text x="1875.20" y="1423.3" font-size="20.53" fill="#1a1a1a" textLength="55.90" lengthAdjust="spacingAndGlyphs" stroke="#1a1a1a" stroke-width="0.4">6,500</text>
<text x="2044.60" y="1423.3" font-size="20.53" fill="#1a1a1a" textLength="55.45" lengthAdjust="spacingAndGlyphs" stroke="#1a1a1a" stroke-width="0.4">8,000</text>
<text x="2213.20" y="1423.3" font-size="20.53" fill="#1a1a1a" textLength="55.90" lengthAdjust="spacingAndGlyphs" stroke="#1a1a1a" stroke-width="0.4">2,500</text>
<text x="2382.00" y="1423.3" font-size="20.53" fill="#1a1a1a" textLength="56.51" lengthAdjust="spacingAndGlyphs" stroke="#1a1a1a" stroke-width="0.4">1,500</text>
<text x="2571.10" y="1423.3" font-size="20.53" fill="#1a1a1a" textLength="36.49" lengthAdjust="spacingAndGlyphs" stroke="#1a1a1a" stroke-width="0.4">300</text>
<text x="2739.20" y="1423.3" font-size="20.53" fill="#1a1a1a" textLength="36.49" lengthAdjust="spacingAndGlyphs" stroke="#1a1a1a" stroke-width="0.4">500</text>
<text x="161.40" y="1451.3" font-size="20.53" fill="#1a1a1a" textLength="461.02" lengthAdjust="spacingAndGlyphs" stroke="#1a1a1a" stroke-width="0.4">Depreciation (Depreciation Period (Years) - 10)</text>
<text x="1907.00" y="1451.3" font-size="20.53" fill="#1a1a1a" textLength="23.64" lengthAdjust="spacingAndGlyphs" stroke="#1a1a1a" stroke-width="0.4">54</text>
<text x="2062.80" y="1451.3" font-size="20.53" fill="#1a1a1a" textLength="38.51" lengthAdjust="spacingAndGlyphs" stroke="#1a1a1a" stroke-width="0.4">121</text>
<text x="2231.80" y="1451.3" font-size="20.53" fill="#1a1a1a" textLength="38.58" lengthAdjust="spacingAndGlyphs" stroke="#1a1a1a" stroke-width="0.4">142</text>
<text x="2400.80" y="1451.3" font-size="20.53" fill="#1a1a1a" textLength="38.04" lengthAdjust="spacingAndGlyphs" stroke="#1a1a1a" stroke-width="0.4">154</text>
<text x="2569.90" y="1451.3" font-size="20.53" fill="#1a1a1a" textLength="39.14" lengthAdjust="spacingAndGlyphs" stroke="#1a1a1a" stroke-width="0.4">157</text>
<text x="2738.00" y="1451.3" font-size="20.53" fill="#1a1a1a" textLength="38.33" lengthAdjust="spacingAndGlyphs" stroke="#1a1a1a" stroke-width="0.4">161</text>
<rect x="137" y="1457" width="2723.5" height="28.5" fill="#4bb1e9"/>
<text x="141.80" y="1479.2" font-size="20.53" fill="#fff" textLength="258.22" lengthAdjust="spacingAndGlyphs" font-weight="bold" stroke="#fff" stroke-width="0.35">Closing Net Book Value</text>
<text x="1722.90" y="1479.2" font-size="20.53" fill="#fff" textLength="9.61" lengthAdjust="spacingAndGlyphs" style="font-family:'DejaVu Sans','DejaVu Sans Condensed',sans-serif" font-weight="bold" stroke="#fff" stroke-width="0.35">-</text>
<text x="1863.90" y="1479.2" font-size="20.53" fill="#fff" textLength="64.25" lengthAdjust="spacingAndGlyphs" style="font-family:'DejaVu Sans','DejaVu Sans Condensed',sans-serif" font-weight="bold" stroke="#fff" stroke-width="0.35">6,446</text>
<text x="2019.00" y="1479.2" font-size="20.53" fill="#fff" textLength="78.61" lengthAdjust="spacingAndGlyphs" style="font-family:'DejaVu Sans','DejaVu Sans Condensed',sans-serif" font-weight="bold" stroke="#fff" stroke-width="0.35">14,325</text>
<text x="2188.00" y="1479.2" font-size="20.53" fill="#fff" textLength="78.63" lengthAdjust="spacingAndGlyphs" style="font-family:'DejaVu Sans','DejaVu Sans Condensed',sans-serif" font-weight="bold" stroke="#fff" stroke-width="0.35">16,683</text>
<text x="2356.90" y="1479.2" font-size="20.53" fill="#fff" textLength="78.60" lengthAdjust="spacingAndGlyphs" style="font-family:'DejaVu Sans','DejaVu Sans Condensed',sans-serif" font-weight="bold" stroke="#fff" stroke-width="0.35">18,029</text>
<text x="2526.00" y="1479.2" font-size="20.53" fill="#fff" textLength="78.63" lengthAdjust="spacingAndGlyphs" style="font-family:'DejaVu Sans','DejaVu Sans Condensed',sans-serif" font-weight="bold" stroke="#fff" stroke-width="0.35">18,173</text>
<text x="2694.80" y="1479.2" font-size="20.53" fill="#fff" textLength="79.17" lengthAdjust="spacingAndGlyphs" style="font-family:'DejaVu Sans','DejaVu Sans Condensed',sans-serif" font-weight="bold" stroke="#fff" stroke-width="0.35">18,512</text>
<rect x="137" y="1527" width="2723.5" height="28" fill="#4bb1e9"/>
<text x="141.60" y="1549.3" font-size="20.53" fill="#fff" textLength="269.02" lengthAdjust="spacingAndGlyphs" font-weight="bold" stroke="#fff" stroke-width="0.35">Opening Net Book Value</text>
<text x="1890.50" y="1549.3" font-size="20.53" fill="#fff" textLength="10.76" lengthAdjust="spacingAndGlyphs" style="font-family:'DejaVu Sans','DejaVu Sans Condensed',sans-serif" font-weight="bold" stroke="#fff" stroke-width="0.35">-</text>
<text x="2060.00" y="1549.3" font-size="20.53" fill="#fff" textLength="9.81" lengthAdjust="spacingAndGlyphs" style="font-family:'DejaVu Sans','DejaVu Sans Condensed',sans-serif" font-weight="bold" stroke="#fff" stroke-width="0.35">-</text>
<text x="2229.00" y="1549.3" font-size="20.53" fill="#fff" textLength="9.81" lengthAdjust="spacingAndGlyphs" style="font-family:'DejaVu Sans','DejaVu Sans Condensed',sans-serif" font-weight="bold" stroke="#fff" stroke-width="0.35">-</text>
<text x="2398.20" y="1549.3" font-size="20.53" fill="#fff" textLength="9.61" lengthAdjust="spacingAndGlyphs" style="font-family:'DejaVu Sans','DejaVu Sans Condensed',sans-serif" font-weight="bold" stroke="#fff" stroke-width="0.35">-</text>
<text x="2567.00" y="1549.3" font-size="20.53" fill="#fff" textLength="9.81" lengthAdjust="spacingAndGlyphs" style="font-family:'DejaVu Sans','DejaVu Sans Condensed',sans-serif" font-weight="bold" stroke="#fff" stroke-width="0.35">-</text>
<text x="2734.80" y="1549.3" font-size="20.53" fill="#fff" textLength="10.25" lengthAdjust="spacingAndGlyphs" style="font-family:'DejaVu Sans','DejaVu Sans Condensed',sans-serif" font-weight="bold" stroke="#fff" stroke-width="0.35">-</text>
<text x="161.40" y="1576.6" font-size="20.53" fill="#1a1a1a" textLength="299.41" lengthAdjust="spacingAndGlyphs" stroke="#1a1a1a" stroke-width="0.4">Expenditure - Non-Amortizable</text>
<text x="1899.90" y="1575" font-size="20.53" fill="#1a1a1a" textLength="6.30" lengthAdjust="spacingAndGlyphs" stroke="#1a1a1a" stroke-width="0.4">-</text>
<text x="2068.90" y="1575" font-size="20.53" fill="#1a1a1a" textLength="6.30" lengthAdjust="spacingAndGlyphs" stroke="#1a1a1a" stroke-width="0.4">-</text>
<text x="2237.90" y="1575" font-size="20.53" fill="#1a1a1a" textLength="6.30" lengthAdjust="spacingAndGlyphs" stroke="#1a1a1a" stroke-width="0.4">-</text>
<text x="2407.00" y="1575" font-size="20.53" fill="#1a1a1a" textLength="6.30" lengthAdjust="spacingAndGlyphs" stroke="#1a1a1a" stroke-width="0.4">-</text>
<text x="2575.90" y="1575" font-size="20.53" fill="#1a1a1a" textLength="6.30" lengthAdjust="spacingAndGlyphs" stroke="#1a1a1a" stroke-width="0.4">-</text>
<text x="2743.80" y="1575" font-size="20.53" fill="#1a1a1a" textLength="6.30" lengthAdjust="spacingAndGlyphs" stroke="#1a1a1a" stroke-width="0.4">-</text>
<rect x="137" y="1583" width="2723.5" height="28.5" fill="#4bb1e9"/>
<text x="141.80" y="1605.6" font-size="20.53" fill="#fff" textLength="258.22" lengthAdjust="spacingAndGlyphs" font-weight="bold" stroke="#fff" stroke-width="0.35">Closing Net Book Value</text>
<text x="1890.50" y="1605.6" font-size="20.53" fill="#fff" textLength="10.76" lengthAdjust="spacingAndGlyphs" style="font-family:'DejaVu Sans','DejaVu Sans Condensed',sans-serif" font-weight="bold" stroke="#fff" stroke-width="0.35">-</text>
<text x="2060.00" y="1605.6" font-size="20.53" fill="#fff" textLength="9.81" lengthAdjust="spacingAndGlyphs" style="font-family:'DejaVu Sans','DejaVu Sans Condensed',sans-serif" font-weight="bold" stroke="#fff" stroke-width="0.35">-</text>
<text x="2229.00" y="1605.6" font-size="20.53" fill="#fff" textLength="9.81" lengthAdjust="spacingAndGlyphs" style="font-family:'DejaVu Sans','DejaVu Sans Condensed',sans-serif" font-weight="bold" stroke="#fff" stroke-width="0.35">-</text>
<text x="2398.20" y="1605.6" font-size="20.53" fill="#fff" textLength="9.61" lengthAdjust="spacingAndGlyphs" style="font-family:'DejaVu Sans','DejaVu Sans Condensed',sans-serif" font-weight="bold" stroke="#fff" stroke-width="0.35">-</text>
<text x="2567.00" y="1605.6" font-size="20.53" fill="#fff" textLength="9.81" lengthAdjust="spacingAndGlyphs" style="font-family:'DejaVu Sans','DejaVu Sans Condensed',sans-serif" font-weight="bold" stroke="#fff" stroke-width="0.35">-</text>
<text x="2734.80" y="1605.6" font-size="20.53" fill="#fff" textLength="10.25" lengthAdjust="spacingAndGlyphs" style="font-family:'DejaVu Sans','DejaVu Sans Condensed',sans-serif" font-weight="bold" stroke="#fff" stroke-width="0.35">-</text>
<line x1="53" y1="514.5" x2="2860.5" y2="514.5" stroke="#9c9c9c" stroke-width="1"/>
<line x1="1773.5" y1="305" x2="1773.5" y2="1670" stroke="#9c9c9c" stroke-width="1"/>
<rect x="2863.5" y="280" width="25" height="1391" rx="12.5" fill="#171717"/>
<rect x="2870" y="304.5" width="12" height="1310" rx="6" fill="#9d9d9d"/>
<path d="M2875.8 286.5 L2882 296 L2869.6 296 Z" fill="#9d9d9d" stroke="#9d9d9d" stroke-width="1.5" stroke-linejoin="round"/>
<path d="M2875.8 1663.5 L2882 1654 L2869.6 1654 Z" fill="#9d9d9d" stroke="#9d9d9d" stroke-width="1.5" stroke-linejoin="round"/>
</svg>
<svg class="ui" style="position:absolute;left:0px;top:11px" width="2902" height="117" viewBox="0 11 2902 117">
<defs><linearGradient id="xg" x1="0" y1="0" x2="1" y2="1"><stop offset="0" stop-color="#1f6f3a"/><stop offset="0.55" stop-color="#2a8a3a"/><stop offset="1" stop-color="#2f6f38"/></linearGradient></defs>
<g>
<rect x="37.8" y="34.7" width="20.3" height="24.3" rx="2.6" fill="url(#xg)"/>
<path d="M37.8 37.3 a2.6 2.6 0 0 1 2.6 -2.6 h6.6 v8 h-9.2 Z" fill="#5fcf5c"/>
<path d="M47 34.7 h8.5 a2.6 2.6 0 0 1 2.6 2.6 v5.9 h-11.1 Z" fill="#b5e46f"/>
<rect x="34.9" y="42.8" width="12.5" height="13.4" rx="2.4" fill="#1a6a43"/>
<text x="41.7" y="52.9" font-size="10.6" fill="#fff" text-anchor="middle" font-weight="bold">X</text>
</g>
<text x="94.60" y="54" font-size="18" fill="#f2f2f2" textLength="219.00" lengthAdjust="spacingAndGlyphs" stroke="#f2f2f2" stroke-width="0.35">mobile-personal-trainer.xlsx</text>
<text x="325.00" y="54" font-size="18" fill="#f2f2f2" textLength="4.90" lengthAdjust="spacingAndGlyphs" stroke="#f2f2f2" stroke-width="0.35">-</text>
<text x="340.80" y="54" font-size="18" fill="#f2f2f2" textLength="83.03" lengthAdjust="spacingAndGlyphs" stroke="#f2f2f2" stroke-width="0.35">Read-Only</text>
<path d="M431.5 43.5 L438.5 50.5 L445.5 43.5" fill="none" stroke="#f2f2f2" stroke-width="1.7" stroke-linecap="round" stroke-linejoin="round"/>
<text x="41.20" y="113.7" font-size="18.7" fill="#f2f2f2" textLength="30.52" lengthAdjust="spacingAndGlyphs" stroke="#f2f2f2" stroke-width="0.35">File</text>
<text x="111.20" y="113.7" font-size="18.7" fill="#fff" textLength="55.84" lengthAdjust="spacingAndGlyphs" font-weight="bold">Home</text>
<text x="196.80" y="113.7" font-size="18.7" fill="#f2f2f2" textLength="47.82" lengthAdjust="spacingAndGlyphs" stroke="#f2f2f2" stroke-width="0.35">Insert</text>
<text x="276.80" y="113.7" font-size="18.7" fill="#f2f2f2" textLength="45.23" lengthAdjust="spacingAndGlyphs" stroke="#f2f2f2" stroke-width="0.35">Draw</text>
<text x="353.00" y="113.7" font-size="18.7" fill="#f2f2f2" textLength="105.22" lengthAdjust="spacingAndGlyphs" stroke="#f2f2f2" stroke-width="0.35">Page Layout</text>
<text x="490.00" y="113.7" font-size="18.7" fill="#f2f2f2" textLength="81.02" lengthAdjust="spacingAndGlyphs" stroke="#f2f2f2" stroke-width="0.35">Formulas</text>
<text x="599.00" y="113.7" font-size="18.7" fill="#f2f2f2" textLength="40.80" lengthAdjust="spacingAndGlyphs" stroke="#f2f2f2" stroke-width="0.35">Data</text>
<text x="670.00" y="113.7" font-size="18.7" fill="#f2f2f2" textLength="61.01" lengthAdjust="spacingAndGlyphs" stroke="#f2f2f2" stroke-width="0.35">Review</text>
<text x="762.00" y="113.7" font-size="18.7" fill="#f2f2f2" textLength="40.09" lengthAdjust="spacingAndGlyphs" stroke="#f2f2f2" stroke-width="0.35">View</text>
<text x="834.00" y="113.7" font-size="18.7" fill="#f2f2f2" textLength="86.50" lengthAdjust="spacingAndGlyphs" stroke="#f2f2f2" stroke-width="0.35">Automate</text>
<text x="950.00" y="113.7" font-size="18.7" fill="#f2f2f2" textLength="41.02" lengthAdjust="spacingAndGlyphs" stroke="#f2f2f2" stroke-width="0.35">Help</text>
<rect x="111" y="120" width="58" height="3" rx="1.5" fill="#5fbe8b"/>
<g fill="none" stroke="#f2f2f2" stroke-width="1.7" stroke-linecap="round">
<circle cx="2488.4" cy="43.8" r="7"/>
<path d="M2483.4 48.9 L2476 57.2"/>
</g>
<defs><clipPath id="av"><circle cx="2571" cy="46.9" r="18.1"/></clipPath><linearGradient id="fc" x1="0" y1="0" x2="1" y2="0"><stop offset="0" stop-color="#c7a08c"/><stop offset="0.5" stop-color="#ad8876"/><stop offset="1" stop-color="#7d6052"/></linearGradient><filter id="bl" x="-10%" y="-10%" width="120%" height="120%"><feGaussianBlur stdDeviation="0.7"/></filter></defs>
<g clip-path="url(#av)"><g filter="url(#bl)">
<rect x="2550" y="26" width="42" height="42" fill="#b9d9da"/>
<rect x="2550" y="26" width="42" height="8.5" fill="#dfe3f0"/>
<rect x="2550" y="33.5" width="42" height="6.6" fill="#a3b8de"/>
<rect x="2550" y="56" width="42" height="12" fill="#c9dcd9"/>
<path d="M2556 68 L2559.5 60.5 L2566.5 56.8 L2571.5 63 L2577 56.8 L2584 60 L2588 68 Z" fill="#d9d0c6"/>
<path d="M2566.5 56.5 L2571.5 66 L2577 56.5 Z" fill="#a07a68"/>
<ellipse cx="2571.4" cy="46.6" rx="7.6" ry="10.6" fill="url(#fc)"/>
<path d="M2564.2 42 C2564.5 36.5 2568 35.4 2571.5 35.4 C2575.5 35.4 2578.6 37.5 2578.8 42.5 C2577 39.5 2574.5 38.6 2571.4 38.6 C2568 38.6 2566 39.6 2564.2 42 Z" fill="#8d7a78"/>
</g></g>
<g fill="none" stroke="#f2f2f2" stroke-width="1.5" stroke-linejoin="round">
<path d="M2634.5 35.8 H2647.5 L2653 43 L2641 56.5 L2629 43 Z"/>
<path d="M2629 43 H2653 M2641 35.8 L2636.5 43 L2641 56.5 L2645.5 43 Z"/>
</g>
<line x1="2703.4" y1="45.7" x2="2718.8" y2="45.7" stroke="#f2f2f2" stroke-width="1.5"/>
<g fill="none" stroke="#f2f2f2" stroke-width="1.5">
<rect x="2775.5" y="42.5" width="11.5" height="11.5" rx="2.5"/>
<path d="M2779 39.5 H2786.5 a3.5 3.5 0 0 1 3.5 3.5 V50.5"/>
<path d="M2847.2 39.5 L2862.8 54.6 M2862.8 39.5 L2847.2 54.6" stroke-width="1.6"/>
</g>
<rect x="2621.5" y="87.7" width="134.5" height="35" rx="5" fill="#262626" stroke="#707070" stroke-width="1"/>
<path d="M2630 97.7 H2644 V108.5 H2636 L2632.3 112 V108.5 H2630 Z" fill="none" stroke="#f2f2f2" stroke-width="1.5" stroke-linejoin="round"/>
<text x="2652.80" y="112.6" font-size="18.7" fill="#f2f2f2" textLength="93.20" lengthAdjust="spacingAndGlyphs" stroke="#f2f2f2" stroke-width="0.35">Comments</text>
<rect x="2768" y="87.3" width="105" height="35.7" rx="6" fill="#3bad62"/>
<path d="M2779 103 H2776 V112.3 H2789 V108.5" fill="none" stroke="#0b1a10" stroke-width="1.5" stroke-linejoin="round" stroke-linecap="round"/>
<path d="M2780 108 C2780 103 2783 100.6 2786.5 100.6 V97.3 L2791.3 102.3 L2786.5 107.3 V104 C2783.5 104 2781.5 105 2780 108 Z" fill="none" stroke="#0b1a10" stroke-width="1.3" stroke-linejoin="round"/>
<text x="2799.20" y="112.6" font-size="18.7" fill="#0b1a10" textLength="49.43" lengthAdjust="spacingAndGlyphs" stroke="#0b1a10" stroke-width="0.35">Share</text>
<path d="M2858.25 103.7 L2862 107.5 L2865.75 103.7" fill="none" stroke="#0b1a10" stroke-width="1.6" stroke-linecap="round" stroke-linejoin="round"/>
</svg>
<svg class="ui" style="position:absolute;left:0px;top:128px" width="2902" height="150" viewBox="0 128 2902 150">
<rect x="23" y="128" width="2855" height="150" rx="10" fill="#292929"/>
<line x1="282.7" y1="135" x2="282.7" y2="269" stroke="#4d4d4d" stroke-width="1.2"/>
<line x1="633.7" y1="135" x2="633.7" y2="269" stroke="#4d4d4d" stroke-width="1.2"/>
<line x1="1083.5" y1="135" x2="1083.5" y2="269" stroke="#4d4d4d" stroke-width="1.2"/>
<line x1="1325.5" y1="135" x2="1325.5" y2="269" stroke="#4d4d4d" stroke-width="1.2"/>
<line x1="1544.4" y1="135" x2="1544.4" y2="269" stroke="#4d4d4d" stroke-width="1.2"/>
<line x1="1868.4" y1="135" x2="1868.4" y2="269" stroke="#4d4d4d" stroke-width="1.2"/>
<line x1="1963.3" y1="135" x2="1963.3" y2="269" stroke="#4d4d4d" stroke-width="1.2"/>
<line x1="2056" y1="135" x2="2056" y2="269" stroke="#4d4d4d" stroke-width="1.2"/>
<line x1="434" y1="194" x2="434" y2="230" stroke="#4d4d4d" stroke-width="1.2"/>
<line x1="499.5" y1="194" x2="499.5" y2="230" stroke="#4d4d4d" stroke-width="1.2"/>
<line x1="763.7" y1="146" x2="763.7" y2="182" stroke="#4d4d4d" stroke-width="1.2"/>
<line x1="763.7" y1="194" x2="763.7" y2="230" stroke="#4d4d4d" stroke-width="1.2"/>
<line x1="851.3" y1="145" x2="851.3" y2="237.5" stroke="#4d4d4d" stroke-width="1.2"/>
<line x1="1235.5" y1="194" x2="1235.5" y2="230" stroke="#4d4d4d" stroke-width="1.2"/>
<text x="108.80" y="267.5" font-size="16.6" fill="#f0f0f0" textLength="69.24" lengthAdjust="spacingAndGlyphs" stroke="#f0f0f0" stroke-width="0.35">Clipboard</text>
<text x="429.00" y="267.5" font-size="16.6" fill="#f0f0f0" textLength="32.03" lengthAdjust="spacingAndGlyphs" stroke="#f0f0f0" stroke-width="0.35">Font</text>
<text x="810.40" y="267.5" font-size="16.6" fill="#f0f0f0" textLength="71.60" lengthAdjust="spacingAndGlyphs" stroke="#f0f0f0" stroke-width="0.35">Alignment</text>
<text x="1163.20" y="267.5" font-size="16.6" fill="#f0f0f0" textLength="57.61" lengthAdjust="spacingAndGlyphs" stroke="#f0f0f0" stroke-width="0.35">Number</text>
<text x="1418.00" y="268.2" font-size="16.6" fill="#f0f0f0" textLength="32.50" lengthAdjust="spacingAndGlyphs" stroke="#f0f0f0" stroke-width="0.35">Cells</text>
<text x="1682.00" y="268.2" font-size="16.6" fill="#f0f0f0" textLength="48.43" lengthAdjust="spacingAndGlyphs" stroke="#f0f0f0" stroke-width="0.35">Editing</text>
<text x="1888.00" y="268.2" font-size="16.6" fill="#f0f0f0" textLength="53.00" lengthAdjust="spacingAndGlyphs" stroke="#f0f0f0" stroke-width="0.35">Add-ins</text>
<path d="M276 257.8 H265.8 V268 M269.2 261.2 L276 268 M276 262.2 V268 H270.2" fill="none" stroke="#d2d2d2" stroke-width="1.5"/>
<path d="M626.8 257.8 H616.6 V268 M620 261.2 L626.8 268 M626.8 262.2 V268 H621" fill="none" stroke="#d2d2d2" stroke-width="1.5"/>
<path d="M1077 257.8 H1066.8 V268 M1070.2 261.2 L1077 268 M1077 262.2 V268 H1071.2" fill="none" stroke="#d2d2d2" stroke-width="1.5"/>
<path d="M1318.7 257.8 H1308.5 V268 M1311.9 261.2 L1318.7 268 M1318.7 262.2 V268 H1312.9" fill="none" stroke="#d2d2d2" stroke-width="1.5"/>
<path d="M62 148.5 H57 V181 H74.5 M82 148.5 H84.8 V157" fill="none" stroke="#eaa53e" stroke-width="3.6" stroke-linejoin="miter"/>
<path d="M62.5 151.5 V146.5 H67.5 a4 4 0 0 1 8 0 H80.8 V151.5 Z" fill="none" stroke="#bdbdbd" stroke-width="1.6" stroke-linejoin="round"/>
<rect x="75.8" y="160" width="19.4" height="25.2" fill="#292929" stroke="#d2d2d2" stroke-width="1.8"/>
<text x="51.40" y="209.5" font-size="17" fill="#f0f0f0" textLength="40.63" lengthAdjust="spacingAndGlyphs" stroke="#f0f0f0" stroke-width="0.35">Paste</text>
<path d="M67.25 224.6 L71 228.4 L74.75 224.6" fill="none" stroke="#f0f0f0" stroke-width="1.6" stroke-linecap="round" stroke-linejoin="round"/>
<path d="M119.2 141 L129.6 158.3 M129.8 141 L119.4 158.3" fill="none" stroke="#d2d2d2" stroke-width="1.5" stroke-linecap="round"/>
<circle cx="118.8" cy="160.7" r="2.6" fill="none" stroke="#3b97de" stroke-width="1.5"/><circle cx="130.2" cy="160.7" r="2.6" fill="none" stroke="#3b97de" stroke-width="1.5"/>
<text x="142.00" y="158.4" font-size="17" fill="#f0f0f0" textLength="27.21" lengthAdjust="spacingAndGlyphs" stroke="#f0f0f0" stroke-width="0.35">Cut</text>
<path d="M120.5 199.5 H112.8 V180.5 H121 L124 183.5" fill="none" stroke="#d2d2d2" stroke-width="1.5" stroke-linejoin="round"/>
<path d="M121.5 185.5 H130.5 L135.5 190.5 V202.3 H121.5 Z M130.5 185.5 V190.5 H135.5" fill="none" stroke="#d2d2d2" stroke-width="1.5" stroke-linejoin="round"/>
<line x1="125" y1="194.5" x2="132.5" y2="194.5" stroke="#d2d2d2" stroke-width="1.4"/>
<line x1="125" y1="198" x2="132.5" y2="198" stroke="#d2d2d2" stroke-width="1.4"/>
<text x="142.00" y="197.5" font-size="17" fill="#f0f0f0" textLength="41.51" lengthAdjust="spacingAndGlyphs" stroke="#f0f0f0" stroke-width="0.35">Copy</text>
<path d="M211.25 188.8 L215 192.6 L218.75 188.8" fill="none" stroke="#f0f0f0" stroke-width="1.6" stroke-linecap="round" stroke-linejoin="round"/>
<path d="M112.5 229.5 L126 223.8 L131.5 231.5 L121.5 239.5 Z" fill="none" stroke="#eaa53e" stroke-width="1.5" stroke-linejoin="round"/>
<path d="M114 230.5 L121.5 239 L130 232.2 L124.5 231 L119.5 233.5 Z" fill="#eaa53e"/>
<path d="M126.3 223.6 L128.2 220.8 L133.2 227.6 L131.6 231.3" fill="none" stroke="#d2d2d2" stroke-width="1.5" stroke-linejoin="round"/>
<path d="M130.6 224 L134.2 219.4 a1.8 1.8 0 0 1 2.8 2.2 L133 226.8" fill="none" stroke="#d2d2d2" stroke-width="1.5" stroke-linejoin="round"/>
<text x="141.20" y="236.8" font-size="17" fill="#f0f0f0" textLength="115.82" lengthAdjust="spacingAndGlyphs" stroke="#f0f0f0" stroke-width="0.35">Format Painter</text>
<rect x="295.5" y="146.6" width="180" height="35" rx="6" fill="#292929" stroke="#636363" stroke-width="1.2"/>
<rect x="479" y="146.6" width="64.6" height="35" rx="6" fill="#292929" stroke="#636363" stroke-width="1.2"/>
<text x="298.00" y="170.4" font-size="17" fill="#f0f0f0" textLength="63.00" lengthAdjust="spacingAndGlyphs" stroke="#f0f0f0" stroke-width="0.35">Tahoma</text>
<text x="482.00" y="170.4" font-size="17" fill="#f0f0f0" textLength="10.00" lengthAdjust="spacingAndGlyphs" stroke="#f0f0f0" stroke-width="0.35">8</text>
<path d="M463 162.7 L467 166.7 L471 162.7" fill="none" stroke="#f0f0f0" stroke-width="1.6" stroke-linecap="round" stroke-linejoin="round"/>
<path d="M531 162.7 L535 166.7 L539 162.7" fill="none" stroke="#f0f0f0" stroke-width="1.6" stroke-linecap="round" stroke-linejoin="round"/>
<text x="553.00" y="172" font-size="27" fill="#d2d2d2" textLength="19.00" lengthAdjust="spacingAndGlyphs" stroke="#d2d2d2" stroke-width="0.35">A</text>
<path d="M570.8 157 L574.3 153.5 L577.8 157" fill="none" stroke="#3b97de" stroke-width="1.7" stroke-linecap="round" stroke-linejoin="round"/>
<text x="595.00" y="172" font-size="21.5" fill="#d2d2d2" textLength="14.50" lengthAdjust="spacingAndGlyphs" stroke="#d2d2d2" stroke-width="0.35">A</text>
<path d="M609.5 154 L613 157.5 L616.5 154" fill="none" stroke="#3b97de" stroke-width="1.7" stroke-linecap="round" stroke-linejoin="round"/>
<text x="313" y="217.6" font-size="20" fill="#d2d2d2" text-anchor="middle" font-weight="bold">B</text>
<text x="351.8" y="217.6" font-size="20.5" fill="#d2d2d2" text-anchor="middle" style="font-family:'Liberation Serif','DejaVu Serif',serif" font-style="italic" stroke="#d2d2d2" stroke-width="0.35">I</text>
<text x="390" y="216.5" font-size="19" fill="#d2d2d2" text-anchor="middle" stroke="#d2d2d2" stroke-width="0.35">U</text>
<line x1="383" y1="220.2" x2="397" y2="220.2" stroke="#d2d2d2" stroke-width="1.5"/>
<path d="M415.25 210.6 L419 214.4 L422.75 210.6" fill="none" stroke="#f0f0f0" stroke-width="1.6" stroke-linecap="round" stroke-linejoin="round"/>
<path d="M444.8 200.6 H466.2 M444.8 211.2 H466.2 M444.8 200.6 V220 M455.5 200.6 V220 M466.2 200.6 V220" fill="none" stroke="#d2d2d2" stroke-width="1.5" stroke-dasharray="1.6 1.6"/>
<line x1="444" y1="221.9" x2="467" y2="221.9" stroke="#d2d2d2" stroke-width="1.8"/>
<path d="M480.25 210.6 L484 214.4 L487.75 210.6" fill="none" stroke="#f0f0f0" stroke-width="1.6" stroke-linecap="round" stroke-linejoin="round"/>
<path d="M519.5 201.5 L512.6 209.5 L519.5 216.6 L527.2 208.6 L521.6 202.8 M521.8 208 V200.8 a1.6 1.6 0 0 0 -3.2 0 V204" fill="none" stroke="#d2d2d2" stroke-width="1.5" stroke-linejoin="round" stroke-linecap="round"/>
<path d="M526.5 206.2 C529.5 206.5 530.8 209.5 529.6 213.5" fill="none" stroke="#3b97de" stroke-width="2" stroke-linecap="round"/>
<rect x="509" y="218" width="24.2" height="5.6" fill="#ffee00"/>
<path d="M545.55 210.6 L549.3 214.4 L553.05 210.6" fill="none" stroke="#f0f0f0" stroke-width="1.6" stroke-linecap="round" stroke-linejoin="round"/>
<text x="574.30" y="216.3" font-size="22" fill="#d2d2d2" textLength="15.00" lengthAdjust="spacingAndGlyphs" stroke="#d2d2d2" stroke-width="0.35">A</text>
<rect x="569.8" y="218" width="24.2" height="5.6" fill="#f30d0d"/>
<path d="M606.25 210.6 L610 214.4 L613.75 210.6" fill="none" stroke="#f0f0f0" stroke-width="1.6" stroke-linecap="round" stroke-linejoin="round"/>
<line x1="653" y1="152.4" x2="675" y2="152.4" stroke="#d2d2d2" stroke-width="1.6"/>
<line x1="656.3" y1="158.9" x2="671.7" y2="158.9" stroke="#d2d2d2" stroke-width="1.6"/>
<line x1="653" y1="165.3" x2="675" y2="165.3" stroke="#d2d2d2" stroke-width="1.6"/>
<rect x="685.3" y="146.6" width="35.6" height="35" rx="6" fill="#3e3e3e" stroke="#757575" stroke-width="1.2"/>
<line x1="692.2" y1="157" x2="713.8" y2="157" stroke="#d2d2d2" stroke-width="1.6"/>
<line x1="695.44" y1="163.4" x2="710.56" y2="163.4" stroke="#d2d2d2" stroke-width="1.6"/>
<line x1="692.2" y1="169.5" x2="713.8" y2="169.5" stroke="#d2d2d2" stroke-width="1.6"/>
<line x1="731" y1="162.6" x2="753" y2="162.6" stroke="#d2d2d2" stroke-width="1.6"/>
<line x1="734.3" y1="169" x2="749.7" y2="169" stroke="#d2d2d2" stroke-width="1.6"/>
<line x1="731" y1="175.2" x2="753" y2="175.2" stroke="#d2d2d2" stroke-width="1.6"/>
<line x1="653" y1="201.8" x2="675" y2="201.8" stroke="#d2d2d2" stroke-width="1.6"/>
<line x1="653" y1="208" x2="668.4" y2="208" stroke="#d2d2d2" stroke-width="1.6"/>
<line x1="653" y1="214" x2="675" y2="214" stroke="#d2d2d2" stroke-width="1.6"/>
<line x1="653" y1="220.2" x2="668.4" y2="220.2" stroke="#d2d2d2" stroke-width="1.6"/>
<line x1="692.2" y1="201.8" x2="713.8" y2="201.8" stroke="#d2d2d2" stroke-width="1.6"/>
<line x1="695.44" y1="208" x2="710.56" y2="208" stroke="#d2d2d2" stroke-width="1.6"/>
<line x1="692.2" y1="214" x2="713.8" y2="214" stroke="#d2d2d2" stroke-width="1.6"/>
<line x1="695.44" y1="220.2" x2="710.56" y2="220.2" stroke="#d2d2d2" stroke-width="1.6"/>
<line x1="731" y1="201.8" x2="753" y2="201.8" stroke="#d2d2d2" stroke-width="1.6"/>
<line x1="737.6" y1="208" x2="753" y2="208" stroke="#d2d2d2" stroke-width="1.6"/>
<line x1="731" y1="214" x2="753" y2="214" stroke="#d2d2d2" stroke-width="1.6"/>
<line x1="737.6" y1="220.2" x2="753" y2="220.2" stroke="#d2d2d2" stroke-width="1.6"/>
<text transform="translate(777.5,166) rotate(-52)" font-size="14.5" fill="#d2d2d2">ab</text>
<path d="M781.5 173.5 L796.5 158.2 M789.5 158 H796.8 V165.3" fill="none" stroke="#3b97de" stroke-width="1.8" stroke-linecap="round" stroke-linejoin="round"/>
<path d="M806.25 162.4 L810 166.2 L813.75 162.4" fill="none" stroke="#f0f0f0" stroke-width="1.6" stroke-linecap="round" stroke-linejoin="round"/>
<line x1="774" y1="201.8" x2="796" y2="201.8" stroke="#d2d2d2" stroke-width="1.6"/>
<line x1="774" y1="220.2" x2="796" y2="220.2" stroke="#d2d2d2" stroke-width="1.6"/>
<line x1="785.5" y1="208" x2="796" y2="208" stroke="#d2d2d2" stroke-width="1.6"/>
<line x1="785.5" y1="214" x2="796" y2="214" stroke="#d2d2d2" stroke-width="1.6"/>
<path d="M783.5 211 H774.8 M778.4 207.4 L774.8 211 L778.4 214.6" fill="none" stroke="#3b97de" stroke-width="1.7" stroke-linecap="round" stroke-linejoin="round"/>
<line x1="813" y1="201.8" x2="835" y2="201.8" stroke="#d2d2d2" stroke-width="1.6"/>
<line x1="813" y1="220.2" x2="835" y2="220.2" stroke="#d2d2d2" stroke-width="1.6"/>
<line x1="824.5" y1="208" x2="835" y2="208" stroke="#d2d2d2" stroke-width="1.6"/>
<line x1="824.5" y1="214" x2="835" y2="214" stroke="#d2d2d2" stroke-width="1.6"/>
<path d="M813.5 211 H822.2 M818.6 207.4 L822.2 211 L818.6 214.6" fill="none" stroke="#3b97de" stroke-width="1.7" stroke-linecap="round" stroke-linejoin="round"/>
<text x="870.00" y="164.5" font-size="14.5" fill="#d2d2d2" textLength="16.00" lengthAdjust="spacingAndGlyphs" stroke="#d2d2d2" stroke-width="0.35">ab</text>
<text x="870" y="174.6" font-size="14.5" fill="#d2d2d2" stroke="#d2d2d2" stroke-width="0.35">c</text>
<path d="M887.5 163.8 H888 a3.6 3.6 0 0 1 0 7.6 H880.5 M884 167.6 L880.3 171.4 L884 175.2" fill="none" stroke="#3b97de" stroke-width="1.8" stroke-linecap="round" stroke-linejoin="round"/>
<text x="897.50" y="170.8" font-size="17" fill="#f0f0f0" textLength="77.15" lengthAdjust="spacingAndGlyphs" stroke="#f0f0f0" stroke-width="0.35">Wrap Text</text>
<path d="M867.8 200.8 H889.6 V222 H867.8 Z M878.7 200.8 V204.8 M878.7 218 V222" fill="none" stroke="#d2d2d2" stroke-width="1.5"/>
<rect x="867.8" y="204.8" width="21.8" height="13.2" fill="none" stroke="#3b97de" stroke-width="1.6"/>
<path d="M871.5 211.4 H886 M874.6 208.4 L871.5 211.4 L874.6 214.4 M882.9 208.4 L886 211.4 L882.9 214.4" fill="none" stroke="#3b97de" stroke-width="1.6" stroke-linecap="round" stroke-linejoin="round"/>
<text x="896.00" y="218.9" font-size="17" fill="#f0f0f0" textLength="127.02" lengthAdjust="spacingAndGlyphs" stroke="#f0f0f0" stroke-width="0.35">Merge &amp; Center</text>
<path d="M1050.25 210.6 L1054 214.4 L1057.75 210.6" fill="none" stroke="#f0f0f0" stroke-width="1.6" stroke-linecap="round" stroke-linejoin="round"/>
<rect x="1096.5" y="146.6" width="217" height="35" rx="6" fill="#292929" stroke="#636363" stroke-width="1.2"/>
<text x="1099.40" y="170.8" font-size="17" fill="#f0f0f0" textLength="59.02" lengthAdjust="spacingAndGlyphs" stroke="#f0f0f0" stroke-width="0.35">General</text>
<path d="M1301 162.7 L1305 166.7 L1309 162.7" fill="none" stroke="#f0f0f0" stroke-width="1.6" stroke-linecap="round" stroke-linejoin="round"/>
<text x="1112.8" y="219.3" font-size="23" fill="#d2d2d2" text-anchor="middle" stroke="#d2d2d2" stroke-width="0.35">$</text>
<path d="M1138.25 210.6 L1142 214.4 L1145.75 210.6" fill="none" stroke="#f0f0f0" stroke-width="1.6" stroke-linecap="round" stroke-linejoin="round"/>
<text x="1162.80" y="221.5" font-size="26" fill="#d2d2d2" textLength="24.21" lengthAdjust="spacingAndGlyphs" stroke="#d2d2d2" stroke-width="0.35">%</text>
<path d="M1214.6 203.6 a5.2 5.2 0 0 1 5.6 5.6 C1220.2 215.5 1216 219.8 1210 221.3 L1209.6 219.8 C1213 218.4 1214.8 216.4 1215 213.8 a5.2 5.2 0 1 1 -0.4 -10.2 Z" fill="#d2d2d2"/>
<text x="1256.50" y="210.3" font-size="14" fill="#d2d2d2" textLength="11.50" lengthAdjust="spacingAndGlyphs" stroke="#d2d2d2" stroke-width="0.35">.0</text>
<text x="1249.00" y="222.8" font-size="14" fill="#d2d2d2" textLength="19.00" lengthAdjust="spacingAndGlyphs" stroke="#d2d2d2" stroke-width="0.35">.00</text>
<path d="M1246 206.3 H1256 M1249.8 202.6 L1246 206.3 L1249.8 210" fill="none" stroke="#3b97de" stroke-width="1.7" stroke-linecap="round" stroke-linejoin="round"/>
<text x="1287.50" y="210.3" font-size="14" fill="#d2d2d2" textLength="19.00" lengthAdjust="spacingAndGlyphs" stroke="#d2d2d2" stroke-width="0.35">.00</text>
<text x="1295.50" y="222.8" font-size="14" fill="#d2d2d2" textLength="11.50" lengthAdjust="spacingAndGlyphs" stroke="#d2d2d2" stroke-width="0.35">.0</text>
<path d="M1284.5 218.6 H1294.5 M1290.7 214.9 L1294.5 218.6 L1290.7 222.3" fill="none" stroke="#3b97de" stroke-width="1.7" stroke-linecap="round" stroke-linejoin="round"/>
<path d="M1348.3 146 H1389.8 V178.5 H1348.3 Z M1361.99 146 V178.5 M1376.11 146 V178.5 M1348.3 156.725 H1389.8 M1348.3 167.775 H1389.8" fill="none" stroke="#d2d2d2" stroke-width="1.6"/>
<rect x="1362" y="156" width="31.5" height="11.6" fill="#1f78d1"/>
<line x1="1376.2" y1="156" x2="1376.2" y2="167.6" stroke="#6fb1ea" stroke-width="1.2"/>
<path d="M1346 161.8 H1364 M1353.5 154.3 L1346 161.8 L1353.5 169.3" fill="none" stroke="#4ea3e6" stroke-width="2" stroke-linecap="round" stroke-linejoin="round"/>
<text x="1346.20" y="209.5" font-size="17" fill="#f0f0f0" textLength="44.85" lengthAdjust="spacingAndGlyphs" stroke="#f0f0f0" stroke-width="0.35">Insert</text>
<path d="M1364.25 224.6 L1368 228.4 L1371.75 224.6" fill="none" stroke="#f0f0f0" stroke-width="1.6" stroke-linecap="round" stroke-linejoin="round"/>
<path d="M1413.5 146 H1455 V178.5 H1413.5 Z M1427.19 146 V178.5 M1441.31 146 V178.5 M1413.5 156.725 H1455 M1413.5 167.775 H1455" fill="none" stroke="#d2d2d2" stroke-width="1.6"/>
<path d="M1419.5 156 H1437.5 L1443.5 161.8 L1437.5 167.6 H1419.5 Z" fill="#1f78d1"/>
<line x1="1432.5" y1="156" x2="1432.5" y2="167.6" stroke="#6fb1ea" stroke-width="1.2"/>
<path d="M1440 153.6 L1456.5 170.4 M1456.5 153.6 L1440 170.4" fill="none" stroke="#e4504e" stroke-width="2" stroke-linecap="round"/>
<text x="1409.00" y="209.5" font-size="17" fill="#f0f0f0" textLength="50.05" lengthAdjust="spacingAndGlyphs" stroke="#f0f0f0" stroke-width="0.35">Delete</text>
<path d="M1429.75 224.6 L1433.5 228.4 L1437.25 224.6" fill="none" stroke="#f0f0f0" stroke-width="1.6" stroke-linecap="round" stroke-linejoin="round"/>
<path d="M1479.5 146 H1521 V178.5 H1479.5 Z M1490.29 146 V178.5 M1510.21 146 V178.5 M1479.5 156.725 H1521 M1479.5 167.775 H1521" fill="none" stroke="#d2d2d2" stroke-width="1.6"/>
<rect x="1490.3" y="156.8" width="20.7" height="10.2" fill="#1f78d1"/>
<path d="M1488.5 140.5 H1511.5 M1488.5 137.8 V143.2 M1511.5 137.8 V143.2" fill="none" stroke="#3b97de" stroke-width="1.7"/>
<text x="1472.00" y="207.8" font-size="17" fill="#f0f0f0" textLength="57.05" lengthAdjust="spacingAndGlyphs" stroke="#f0f0f0" stroke-width="0.35">Format</text>
<path d="M1495.25 222.4 L1499 226.2 L1502.75 222.4" fill="none" stroke="#f0f0f0" stroke-width="1.6" stroke-linecap="round" stroke-linejoin="round"/>
<path d="M1583.3 145.5 V142 H1566.5 L1575.3 151.8 L1566.5 161.6 H1583.3 V158" fill="none" stroke="#d2d2d2" stroke-width="1.7" stroke-linejoin="miter"/>
<text x="1593.00" y="158.4" font-size="17" fill="#f0f0f0" textLength="73.60" lengthAdjust="spacingAndGlyphs" stroke="#f0f0f0" stroke-width="0.35">AutoSum</text>
<path d="M1695.25 150.5 L1699 154.3 L1702.75 150.5" fill="none" stroke="#f0f0f0" stroke-width="1.6" stroke-linecap="round" stroke-linejoin="round"/>
<path d="M1563.8 181.3 H1586.2 V201 H1563.8 Z M1563.8 185 H1586.2" fill="none" stroke="#d2d2d2" stroke-width="1.6"/>
<path d="M1575 187.5 V197.6 M1571 193.8 L1575 197.8 L1579 193.8" fill="none" stroke="#3b97de" stroke-width="1.8" stroke-linecap="round" stroke-linejoin="round"/>
<text x="1593.60" y="197.5" font-size="17" fill="#f0f0f0" textLength="21.05" lengthAdjust="spacingAndGlyphs" stroke="#f0f0f0" stroke-width="0.35">Fill</text>
<path d="M1620.65 188.1 L1624.4 191.9 L1628.15 188.1" fill="none" stroke="#f0f0f0" stroke-width="1.6" stroke-linecap="round" stroke-linejoin="round"/>
<path d="M1564 232.5 L1577.2 219.6 L1585.6 228 L1572.4 241 Z" fill="none" stroke="#c563d4" stroke-width="1.7" stroke-linejoin="round"/>
<path d="M1564 232.5 L1569.3 227.3 L1577.7 235.8 L1572.4 241 Z" fill="#a63db8" stroke="#c563d4" stroke-width="1.2"/>
<text x="1593.00" y="236.8" font-size="17" fill="#f0f0f0" textLength="39.50" lengthAdjust="spacingAndGlyphs" stroke="#f0f0f0" stroke-width="0.35">Clear</text>
<path d="M1638.65 227.1 L1642.4 230.9 L1646.15 227.1" fill="none" stroke="#f0f0f0" stroke-width="1.6" stroke-linecap="round" stroke-linejoin="round"/>
<text x="1729.80" y="160.2" font-size="25" fill="#3b97de" textLength="15.00" lengthAdjust="spacingAndGlyphs" stroke="#3b97de" stroke-width="0.35">A</text>
<text x="1730.00" y="181.4" font-size="24" fill="#d2d2d2" textLength="13.50" lengthAdjust="spacingAndGlyphs" stroke="#d2d2d2" stroke-width="0.35">Z</text>
<path d="M1749.3 152 H1771.5 L1763.5 163.5 V174.8 H1757.5 V163.5 Z" fill="none" stroke="#d2d2d2" stroke-width="1.7" stroke-linejoin="miter"/>
<text x="1725.00" y="207.8" font-size="17" fill="#f0f0f0" textLength="52.02" lengthAdjust="spacingAndGlyphs" stroke="#f0f0f0" stroke-width="0.35">Sort &amp;</text>
<text x="1724.10" y="231.6" font-size="17" fill="#f0f0f0" textLength="37.93" lengthAdjust="spacingAndGlyphs" stroke="#f0f0f0" stroke-width="0.35">Filter</text>
<path d="M1768.25 223.6 L1772 227.4 L1775.75 223.6" fill="none" stroke="#f0f0f0" stroke-width="1.6" stroke-linecap="round" stroke-linejoin="round"/>
<circle cx="1826" cy="156.8" r="15" fill="none" stroke="#d2d2d2" stroke-width="1.7"/>
<path d="M1815.2 167.8 L1799 184.2" fill="none" stroke="#d2d2d2" stroke-width="1.8" stroke-linecap="round"/>
<text x="1793.80" y="207.8" font-size="17" fill="#f0f0f0" textLength="54.25" lengthAdjust="spacingAndGlyphs" stroke="#f0f0f0" stroke-width="0.35">Find &amp;</text>
<text x="1790.00" y="231.6" font-size="17" fill="#f0f0f0" textLength="45.22" lengthAdjust="spacingAndGlyphs" stroke="#f0f0f0" stroke-width="0.35">Select</text>
<path d="M1842.25 223.6 L1846 227.4 L1849.75 223.6" fill="none" stroke="#f0f0f0" stroke-width="1.6" stroke-linecap="round" stroke-linejoin="round"/>
<rect x="1896" y="141.7" width="40.3" height="40.6" fill="#3a2018" stroke="#c9501c" stroke-width="2.2"/>
<rect x="1900.7" y="146.5" width="12.6" height="12.6" fill="#292929" stroke="#c9501c" stroke-width="1.7"/>
<rect x="1919" y="146.5" width="12.6" height="12.6" fill="#292929" stroke="#c9501c" stroke-width="1.7"/>
<rect x="1900.7" y="164.8" width="12.6" height="12.6" fill="#292929" stroke="#c9501c" stroke-width="1.7"/>
<rect x="1919" y="164.8" width="12.6" height="12.6" fill="#292929" stroke="#c9501c" stroke-width="1.7"/>
<text x="1885.40" y="207.8" font-size="17" fill="#f0f0f0" textLength="61.60" lengthAdjust="spacingAndGlyphs" stroke="#f0f0f0" stroke-width="0.35">Add-ins</text>
<path d="M1989.8 141.7 H2030.2 V182.2 H1989.8 Z M1989.8 157 H2030.2 M1989.8 170.5 H2030.2 M2003 170.5 V182.2 M2016.5 170.5 V182.2" fill="none" stroke="#b9b9b9" stroke-width="1.6"/>
<rect x="1989.8" y="141.7" width="40.4" height="5" fill="#8a8a8a"/>
<circle cx="2009" cy="158.2" r="12.6" fill="#292929" stroke="#d2d2d2" stroke-width="1.7"/>
<rect x="2001.3" y="157.5" width="4.2" height="7" fill="#9a9a9a"/>
<rect x="2006.2" y="150.5" width="4.4" height="14" fill="none" stroke="#d2d2d2" stroke-width="1.3"/>
<rect x="2011.6" y="153.8" width="4.2" height="10.7" fill="#3b97de"/>
<path d="M2018 167.3 L2030 180.5" fill="none" stroke="#d2d2d2" stroke-width="2.2" stroke-linecap="round"/>
<text x="1980.00" y="207.8" font-size="17" fill="#f0f0f0" textLength="61.00" lengthAdjust="spacingAndGlyphs" stroke="#f0f0f0" stroke-width="0.35">Analyze</text>
<text x="1991.00" y="231.6" font-size="17" fill="#f0f0f0" textLength="36.03" lengthAdjust="spacingAndGlyphs" stroke="#f0f0f0" stroke-width="0.35">Data</text>
<circle cx="2212.4" cy="198.9" r="56.2" fill="#fff"/>
<rect x="2182" y="173.2" width="61" height="52.8" fill="#5b6cf0"/>
<rect x="2190" y="181.7" width="19" height="14.4" fill="#fff"/>
<rect x="2216.4" y="181.7" width="19" height="14.4" fill="#fff"/>
<rect x="2190" y="203" width="19" height="14.4" fill="#fff"/>
<rect x="2216.4" y="203" width="19" height="14.4" fill="#fff"/>
<text x="2291.90" y="196.9" font-size="47.3" fill="#fff" textLength="119.50" lengthAdjust="spacingAndGlyphs" font-weight="bold" stroke="#fff" stroke-width="1.7" stroke-linejoin="round">FINM</text>
<text x="2450.60" y="196.9" font-size="47.3" fill="#fff" textLength="202.60" lengthAdjust="spacingAndGlyphs" font-weight="bold" stroke="#fff" stroke-width="1.7" stroke-linejoin="round">DELSLAB</text>
<circle cx="2431.1" cy="180.3" r="13" fill="none" stroke="#fff" stroke-width="9"/>
<rect x="2424.3" y="160" width="13.6" height="22" fill="#292929"/>
<rect x="2426.8" y="155" width="8.6" height="26.5" rx="4.3" fill="#fff"/>
<text x="2295.4" y="237" font-size="34.5" fill="#fff" letter-spacing="24.95" stroke="#fff" stroke-width="0.5">Templates</text>
<path d="M2851.5 254.25 L2857 259.75 L2862.5 254.25" fill="none" stroke="#f0f0f0" stroke-width="1.7" stroke-linecap="round" stroke-linejoin="round"/>
</svg>
<svg class="ui" style="position:absolute;left:0px;top:1670px" width="2902" height="92" viewBox="0 1670 2902 92">
<rect x="11" y="1670" width="2880" height="48.5" fill="#0a0a0a"/>
<path d="M54 1685.5 L47 1692.7 L54 1700" fill="none" stroke="#8a8a8a" stroke-width="1.7" stroke-linecap="round" stroke-linejoin="round"/>
<path d="M95.5 1685.5 L102.7 1692.7 L95.5 1700" fill="none" stroke="#d8d8d8" stroke-width="1.7" stroke-linecap="round" stroke-linejoin="round"/>
<text x="190.00" y="1703" font-size="20" fill="#f0f0f0" textLength="83.08" lengthAdjust="spacingAndGlyphs" stroke="#f0f0f0" stroke-width="0.35">Contents</text>
<rect x="299" y="1676.3" width="127.7" height="35.6" rx="7" fill="#fdec6a"/>
<text x="313.00" y="1703" font-size="20" fill="#111" textLength="101.04" lengthAdjust="spacingAndGlyphs" stroke="#111" stroke-width="0.35">Dashboard</text>
<rect x="440" y="1676.3" width="106" height="35.6" rx="7" fill="#fdec6a"/>
<text x="453.60" y="1703" font-size="20" fill="#111" textLength="79.85" lengthAdjust="spacingAndGlyphs" stroke="#111" stroke-width="0.35">Revenue</text>
<rect x="559" y="1676.3" width="157.8" height="35.6" rx="7" fill="#fdec6a"/>
<text x="571.00" y="1703" font-size="20" fill="#111" textLength="134.22" lengthAdjust="spacingAndGlyphs" stroke="#111" stroke-width="0.35">COGS &amp; OPEX</text>
<rect x="729.6" y="1676.3" width="89.4" height="35.6" rx="7" fill="#fdec6a"/>
<text x="742.80" y="1703" font-size="20" fill="#111" textLength="62.45" lengthAdjust="spacingAndGlyphs" stroke="#111" stroke-width="0.35">Payroll</text>
<rect x="932" y="1676.3" width="113" height="35.6" rx="7" fill="#fdec6a"/>
<text x="944.00" y="1703" font-size="20" fill="#111" textLength="87.02" lengthAdjust="spacingAndGlyphs" stroke="#111" stroke-width="0.35">CapTable</text>
<rect x="1058" y="1676.3" width="90" height="35.6" rx="7" fill="#fdec6a"/>
<text x="1070.00" y="1703" font-size="20" fill="#111" textLength="65.45" lengthAdjust="spacingAndGlyphs" stroke="#111" stroke-width="0.35">Capital</text>
<rect x="1161" y="1676.3" width="41.8" height="35.6" rx="7" fill="#4ab1e7"/>
<text x="1172.90" y="1703" font-size="20" fill="#111" textLength="16.72" lengthAdjust="spacingAndGlyphs" stroke="#111" stroke-width="0.35">IS</text>
<rect x="1216" y="1676.3" width="47.9" height="35.6" rx="7" fill="#4ab1e7"/>
<text x="1228.90" y="1703" font-size="20" fill="#111" textLength="22.21" lengthAdjust="spacingAndGlyphs" stroke="#111" stroke-width="0.35">CF</text>
<rect x="1277" y="1676.3" width="48" height="35.6" rx="7" fill="#4ab1e7"/>
<text x="1290.00" y="1703" font-size="20" fill="#111" textLength="23.11" lengthAdjust="spacingAndGlyphs" stroke="#111" stroke-width="0.35">BS</text>
<rect x="1338" y="1676.3" width="115" height="35.6" rx="7" fill="#4ab1e7"/>
<text x="1350.00" y="1703" font-size="20" fill="#111" textLength="88.03" lengthAdjust="spacingAndGlyphs" stroke="#111" stroke-width="0.35">Scenarios</text>
<rect x="1466" y="1676.3" width="115" height="35.6" rx="7" fill="#4ab1e7"/>
<text x="1479.00" y="1703" font-size="20" fill="#111" textLength="88.43" lengthAdjust="spacingAndGlyphs" stroke="#111" stroke-width="0.35">Valuation</text>
<rect x="1594" y="1676.3" width="114" height="35.6" rx="7" fill="#4ab1e7"/>
<text x="1607.00" y="1703" font-size="20" fill="#111" textLength="88.20" lengthAdjust="spacingAndGlyphs" stroke="#111" stroke-width="0.35">Summary</text>
<rect x="1721" y="1676.3" width="48" height="35.6" rx="7" fill="#4ab1e7"/>
<text x="1734.10" y="1703" font-size="20" fill="#111" textLength="22.90" lengthAdjust="spacingAndGlyphs" stroke="#111" stroke-width="0.35">BE</text>
<rect x="1782" y="1676.3" width="72" height="35.6" rx="7" fill="#4ab1e7"/>
<text x="1794.40" y="1703" font-size="20" fill="#111" textLength="47.88" lengthAdjust="spacingAndGlyphs" stroke="#111" stroke-width="0.35">ROIC</text>
<rect x="1866.8" y="1676.3" width="85" height="35.6" rx="7" fill="#4ab1e7"/>
<text x="1879.40" y="1703" font-size="20" fill="#111" textLength="59.63" lengthAdjust="spacingAndGlyphs" stroke="#111" stroke-width="0.35">Charts</text>
<rect x="1965" y="1676.3" width="63.9" height="35.6" rx="7" fill="#4ab1e7"/>
<text x="1978.00" y="1703" font-size="20" fill="#111" textLength="38.48" lengthAdjust="spacingAndGlyphs" stroke="#111" stroke-width="0.35">KPIs</text>
<defs><clipPath id="sc"><rect x="2040" y="1670" width="32" height="48"/></clipPath></defs>
<g clip-path="url(#sc)"><rect x="2042" y="1676.3" width="100" height="35.6" rx="7" fill="#4ab1e7"/><text x="2054.50" y="1703" font-size="20" fill="#111" textLength="87.00" lengthAdjust="spacingAndGlyphs" stroke="#111" stroke-width="0.35">Scenarios</text></g>
<line x1="292" y1="1680.5" x2="292" y2="1707" stroke="#4a4a4a" stroke-width="1.2"/>
<line x1="433" y1="1680.5" x2="433" y2="1707" stroke="#4a4a4a" stroke-width="1.2"/>
<line x1="552.6" y1="1680.5" x2="552.6" y2="1707" stroke="#4a4a4a" stroke-width="1.2"/>
<line x1="723.3" y1="1680.5" x2="723.3" y2="1707" stroke="#4a4a4a" stroke-width="1.2"/>
<line x1="826" y1="1680.5" x2="826" y2="1707" stroke="#4a4a4a" stroke-width="1.2"/>
<line x1="925" y1="1680.5" x2="925" y2="1707" stroke="#4a4a4a" stroke-width="1.2"/>
<line x1="1051.7" y1="1680.5" x2="1051.7" y2="1707" stroke="#4a4a4a" stroke-width="1.2"/>
<line x1="1154.8" y1="1680.5" x2="1154.8" y2="1707" stroke="#4a4a4a" stroke-width="1.2"/>
<line x1="1209.6" y1="1680.5" x2="1209.6" y2="1707" stroke="#4a4a4a" stroke-width="1.2"/>
<line x1="1270.7" y1="1680.5" x2="1270.7" y2="1707" stroke="#4a4a4a" stroke-width="1.2"/>
<line x1="1331.7" y1="1680.5" x2="1331.7" y2="1707" stroke="#4a4a4a" stroke-width="1.2"/>
<line x1="1460" y1="1680.5" x2="1460" y2="1707" stroke="#4a4a4a" stroke-width="1.2"/>
<line x1="1587.4" y1="1680.5" x2="1587.4" y2="1707" stroke="#4a4a4a" stroke-width="1.2"/>
<line x1="1714.8" y1="1680.5" x2="1714.8" y2="1707" stroke="#4a4a4a" stroke-width="1.2"/>
<line x1="1775.6" y1="1680.5" x2="1775.6" y2="1707" stroke="#4a4a4a" stroke-width="1.2"/>
<line x1="1860.6" y1="1680.5" x2="1860.6" y2="1707" stroke="#4a4a4a" stroke-width="1.2"/>
<line x1="1958.5" y1="1680.5" x2="1958.5" y2="1707" stroke="#4a4a4a" stroke-width="1.2"/>
<line x1="2035.4" y1="1680.5" x2="2035.4" y2="1707" stroke="#4a4a4a" stroke-width="1.2"/>
<defs><linearGradient id="cg" x1="0" y1="0" x2="0" y2="1"><stop offset="0" stop-color="#ffffff"/><stop offset="0.45" stop-color="#fffef4"/><stop offset="1" stop-color="#fff8c8"/></linearGradient></defs>
<path d="M825.5 1670 H925.5 a6.5 6.5 0 0 0 -6.2 6.5 V1705.5 a6.5 6.5 0 0 1 -6.5 6.5 H838.5 a6.5 6.5 0 0 1 -6.5 -6.5 V1676.5 a6.5 6.5 0 0 0 -6.5 -6.5 Z" fill="url(#cg)"/>
<text x="843.60" y="1698" font-size="20" fill="#1a1a1a" textLength="63.01" lengthAdjust="spacingAndGlyphs" stroke="#1a1a1a" stroke-width="0.35">CAPEX</text>
<rect x="844.3" y="1705" width="62.5" height="2.4" fill="#1e7a45"/>
<circle cx="2090" cy="1692.5" r="2" fill="#e0e0e0"/>
<circle cx="2095.5" cy="1692.5" r="2" fill="#e0e0e0"/>
<circle cx="2101" cy="1692.5" r="2" fill="#e0e0e0"/>
<path d="M2135 1692.5 H2151.6 M2143.3 1684.2 V1700.8" fill="none" stroke="#e6e6e6" stroke-width="1.6"/>
<rect x="2189.8" y="1687.4" width="3.4" height="3.4" fill="#e6e6e6"/>
<rect x="2189.8" y="1692.9" width="3.4" height="3.4" fill="#e6e6e6"/>
<rect x="2189.8" y="1698.4" width="3.4" height="3.4" fill="#e6e6e6"/>
<rect x="2216" y="1680" width="2644" height="26.6" rx="13.3" fill="#161616"/>
<rect x="2241.7" y="1686.8" width="55.3" height="12.2" rx="6.1" fill="#9d9d9d"/>
<path d="M2224.5 1693 L2233 1686.8 V1699.2 Z" fill="#9d9d9d" stroke="#9d9d9d" stroke-width="1.5" stroke-linejoin="round"/>
<path d="M2852.5 1693 L2844 1686.8 V1699.2 Z" fill="#9d9d9d" stroke="#9d9d9d" stroke-width="1.5" stroke-linejoin="round"/>
<rect x="11" y="1718.5" width="2880" height="32.2" fill="#141414"/>
<line x1="11" y1="1718.5" x2="2891" y2="1718.5" stroke="#3a3a3a" stroke-width="1"/>
<text x="26.60" y="1740.6" font-size="15.6" fill="#f0f0f0" textLength="42.60" lengthAdjust="spacingAndGlyphs" stroke="#f0f0f0" stroke-width="0.35">Ready</text>
<path d="M100 1726.5 H120 V1733 M100 1726.5 V1744 H108 M100 1730.5 H120" fill="none" stroke="#e6e6e6" stroke-width="1.6"/>
<path d="M103 1734.5 H109 M103 1738.5 H107.5" fill="none" stroke="#e6e6e6" stroke-width="1.5"/>
<circle cx="115" cy="1739.5" r="5.6" fill="none" stroke="#e6e6e6" stroke-width="1.6"/><circle cx="115" cy="1739.5" r="2.6" fill="#e6e6e6"/>
<g fill="none" stroke="#e6e6e6" stroke-width="1.6" stroke-linecap="round" stroke-linejoin="round">
<circle cx="156.5" cy="1726.8" r="2.6"/>
<path d="M147.5 1729.5 L153.8 1732.8 V1738.5 L150 1746.5 M165.5 1729.5 L159.2 1732.8 V1737.5 M153.8 1738.5 L156.5 1737.5 L158 1740.5"/>
<path d="M158.8 1739.5 L167 1747.5 M167 1739.5 L158.8 1747.5"/>
</g>
<text x="173.00" y="1740.6" font-size="15.6" fill="#fff" textLength="188.00" lengthAdjust="spacingAndGlyphs" font-weight="bold">Accessibility: Investigate</text>
<rect x="2444.8" y="1719" width="60.2" height="31.7" fill="#262626"/>
<path d="M2464.8 1725.3 H2483.4 V1743 H2464.8 Z M2471 1725.3 V1743 M2477.2 1725.3 V1743 M2464.8 1731.2 H2483.4 M2464.8 1737.1 H2483.4" fill="none" stroke="#f0f0f0" stroke-width="1.7"/>
<path d="M2525 1725.3 H2545 V1743 H2525 Z M2529.3 1729.3 H2540.7 V1739.2 H2529.3 Z M2532 1732.5 H2538 M2532 1735.8 H2538" fill="none" stroke="#f0f0f0" stroke-width="1.7"/>
<path d="M2585 1725.3 H2605 V1743 H2585 Z M2590.7 1725.3 V1734 H2598.3 V1725.3 M2598.3 1734 H2605" fill="none" stroke="#f0f0f0" stroke-width="1.7"/>
<line x1="2633" y1="1734.7" x2="2644.5" y2="1734.7" stroke="#d8d8d8" stroke-width="1.4"/>
<line x1="2653" y1="1734.7" x2="2801" y2="1734.7" stroke="#bdbdbd" stroke-width="1.4"/>
<line x1="2727" y1="1730" x2="2727" y2="1739.5" stroke="#bdbdbd" stroke-width="1.4"/>
<rect x="2733" y="1726" width="7.7" height="17" fill="#bdbdbd"/>
<path d="M2809.5 1734.7 H2820.7 M2815.1 1729.1 V1740.3" fill="none" stroke="#d8d8d8" stroke-width="1.4"/>
<text x="2840.70" y="1740.6" font-size="15.6" fill="#f0f0f0" textLength="38.00" lengthAdjust="spacingAndGlyphs" stroke="#f0f0f0" stroke-width="0.35">140%</text>
</svg>
</body></html>
